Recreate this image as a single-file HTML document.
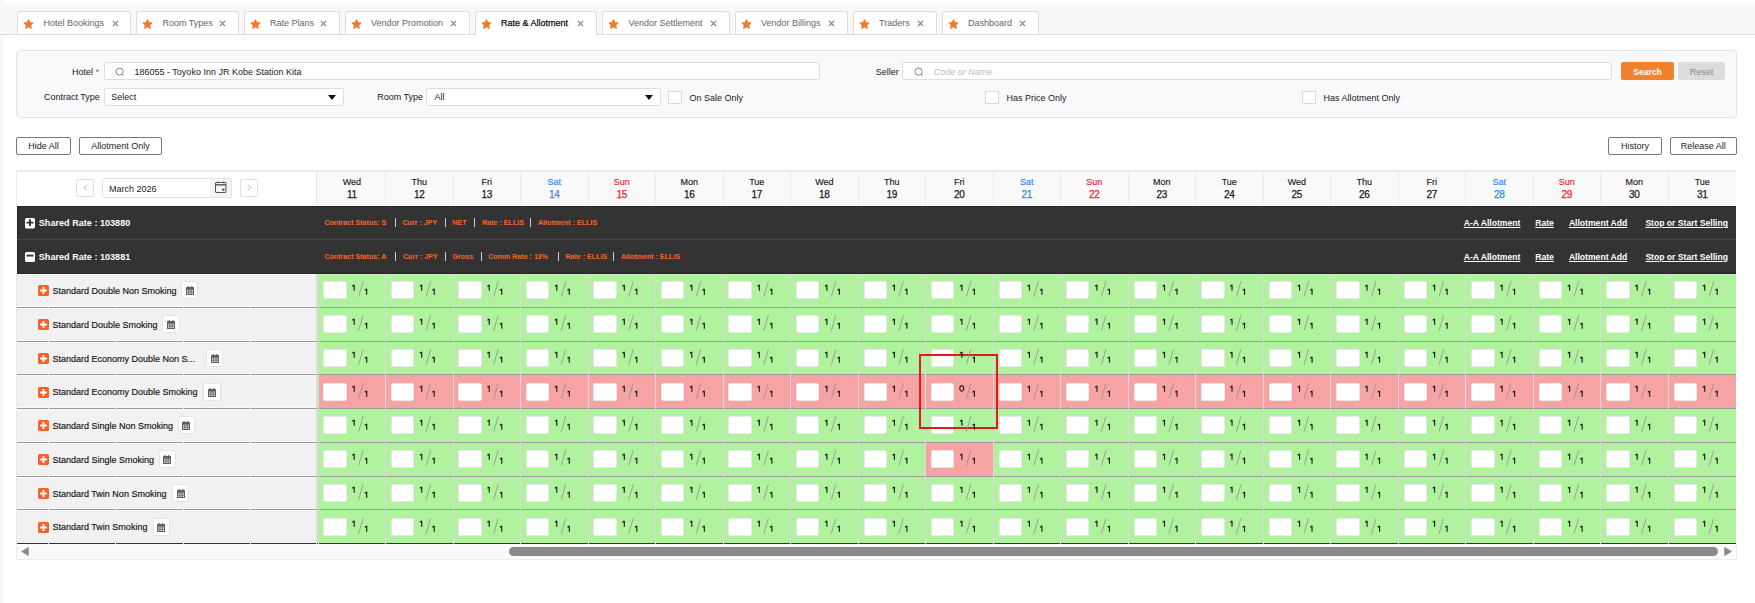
<!DOCTYPE html><html><head><meta charset="utf-8"><style>html,body{margin:0;padding:0;}body{width:1755px;height:603px;overflow:hidden;position:relative;background:#fff;font-family:"Liberation Sans", sans-serif;}.t{position:absolute;white-space:nowrap;}.b{position:absolute;}svg{display:block}</style></head><body><div class="b" style="left:0.00px;top:0.00px;width:3.00px;height:603.00px;background:linear-gradient(90deg,rgba(0,0,30,0.035),rgba(0,0,30,0.015));"></div><div class="b" style="left:0.00px;top:4.00px;width:1755.00px;height:30.00px;background:#f8f7fa;border-bottom:1px solid #dcdcdc;"></div><div class="b" style="left:17.00px;top:11.00px;width:114.00px;height:23.00px;background:#fff;border:1px solid #dcdcdc;border-bottom:none;border-radius:3px 3px 0 0;box-sizing:border-box;"></div><div class="b" style="left:23.00px;top:18.6px;"><svg width="11" height="11" viewBox="0 0 11 11"><path d="M5.50 0.50L6.94 3.52L10.26 3.95L7.83 6.26L8.44 9.55L5.50 7.95L2.56 9.55L3.17 6.26L0.74 3.95L4.06 3.52z" fill="#f07a2a" stroke="#f07a2a" stroke-width="0.8" stroke-linejoin="round"/></svg></div><div class="t" style="left:43.50px;top:19.38px;font-size:9px;line-height:9px;color:#666;">Hotel Bookings</div><div class="b" style="left:111.70px;top:19.6px;"><svg width="7" height="7" viewBox="0 0 7 7"><path d="M0.9 0.9L6.1 6.1M6.1 0.9L0.9 6.1" stroke="#777" stroke-width="1.05"/></svg></div><div class="b" style="left:136.00px;top:11.00px;width:102.50px;height:23.00px;background:#fff;border:1px solid #dcdcdc;border-bottom:none;border-radius:3px 3px 0 0;box-sizing:border-box;"></div><div class="b" style="left:142.00px;top:18.6px;"><svg width="11" height="11" viewBox="0 0 11 11"><path d="M5.50 0.50L6.94 3.52L10.26 3.95L7.83 6.26L8.44 9.55L5.50 7.95L2.56 9.55L3.17 6.26L0.74 3.95L4.06 3.52z" fill="#f07a2a" stroke="#f07a2a" stroke-width="0.8" stroke-linejoin="round"/></svg></div><div class="t" style="left:162.50px;top:19.38px;font-size:9px;line-height:9px;color:#666;">Room Types</div><div class="b" style="left:219.20px;top:19.6px;"><svg width="7" height="7" viewBox="0 0 7 7"><path d="M0.9 0.9L6.1 6.1M6.1 0.9L0.9 6.1" stroke="#777" stroke-width="1.05"/></svg></div><div class="b" style="left:243.50px;top:11.00px;width:96.00px;height:23.00px;background:#fff;border:1px solid #dcdcdc;border-bottom:none;border-radius:3px 3px 0 0;box-sizing:border-box;"></div><div class="b" style="left:249.50px;top:18.6px;"><svg width="11" height="11" viewBox="0 0 11 11"><path d="M5.50 0.50L6.94 3.52L10.26 3.95L7.83 6.26L8.44 9.55L5.50 7.95L2.56 9.55L3.17 6.26L0.74 3.95L4.06 3.52z" fill="#f07a2a" stroke="#f07a2a" stroke-width="0.8" stroke-linejoin="round"/></svg></div><div class="t" style="left:270.00px;top:19.38px;font-size:9px;line-height:9px;color:#666;">Rate Plans</div><div class="b" style="left:320.20px;top:19.6px;"><svg width="7" height="7" viewBox="0 0 7 7"><path d="M0.9 0.9L6.1 6.1M6.1 0.9L0.9 6.1" stroke="#777" stroke-width="1.05"/></svg></div><div class="b" style="left:344.50px;top:11.00px;width:125.00px;height:23.00px;background:#fff;border:1px solid #dcdcdc;border-bottom:none;border-radius:3px 3px 0 0;box-sizing:border-box;"></div><div class="b" style="left:350.50px;top:18.6px;"><svg width="11" height="11" viewBox="0 0 11 11"><path d="M5.50 0.50L6.94 3.52L10.26 3.95L7.83 6.26L8.44 9.55L5.50 7.95L2.56 9.55L3.17 6.26L0.74 3.95L4.06 3.52z" fill="#f07a2a" stroke="#f07a2a" stroke-width="0.8" stroke-linejoin="round"/></svg></div><div class="t" style="left:371.00px;top:19.38px;font-size:9px;line-height:9px;color:#666;">Vendor Promotion</div><div class="b" style="left:450.20px;top:19.6px;"><svg width="7" height="7" viewBox="0 0 7 7"><path d="M0.9 0.9L6.1 6.1M6.1 0.9L0.9 6.1" stroke="#777" stroke-width="1.05"/></svg></div><div class="b" style="left:474.50px;top:11.00px;width:122.00px;height:24.00px;background:#fff;border:1px solid #dcdcdc;border-bottom:none;border-radius:3px 3px 0 0;box-sizing:border-box;"></div><div class="b" style="left:480.50px;top:18.6px;"><svg width="11" height="11" viewBox="0 0 11 11"><path d="M5.50 0.50L6.94 3.52L10.26 3.95L7.83 6.26L8.44 9.55L5.50 7.95L2.56 9.55L3.17 6.26L0.74 3.95L4.06 3.52z" fill="#f07a2a" stroke="#f07a2a" stroke-width="0.8" stroke-linejoin="round"/></svg></div><div class="t" style="left:501.00px;top:19.38px;font-size:9px;line-height:9px;color:#111;-webkit-text-stroke:0.25px #111;">Rate &amp; Allotment</div><div class="b" style="left:577.20px;top:19.6px;"><svg width="7" height="7" viewBox="0 0 7 7"><path d="M0.9 0.9L6.1 6.1M6.1 0.9L0.9 6.1" stroke="#777" stroke-width="1.05"/></svg></div><div class="b" style="left:602.00px;top:11.00px;width:127.50px;height:23.00px;background:#fff;border:1px solid #dcdcdc;border-bottom:none;border-radius:3px 3px 0 0;box-sizing:border-box;"></div><div class="b" style="left:608.00px;top:18.6px;"><svg width="11" height="11" viewBox="0 0 11 11"><path d="M5.50 0.50L6.94 3.52L10.26 3.95L7.83 6.26L8.44 9.55L5.50 7.95L2.56 9.55L3.17 6.26L0.74 3.95L4.06 3.52z" fill="#f07a2a" stroke="#f07a2a" stroke-width="0.8" stroke-linejoin="round"/></svg></div><div class="t" style="left:628.50px;top:19.38px;font-size:9px;line-height:9px;color:#666;">Vendor Settlement</div><div class="b" style="left:710.20px;top:19.6px;"><svg width="7" height="7" viewBox="0 0 7 7"><path d="M0.9 0.9L6.1 6.1M6.1 0.9L0.9 6.1" stroke="#777" stroke-width="1.05"/></svg></div><div class="b" style="left:734.50px;top:11.00px;width:113.00px;height:23.00px;background:#fff;border:1px solid #dcdcdc;border-bottom:none;border-radius:3px 3px 0 0;box-sizing:border-box;"></div><div class="b" style="left:740.50px;top:18.6px;"><svg width="11" height="11" viewBox="0 0 11 11"><path d="M5.50 0.50L6.94 3.52L10.26 3.95L7.83 6.26L8.44 9.55L5.50 7.95L2.56 9.55L3.17 6.26L0.74 3.95L4.06 3.52z" fill="#f07a2a" stroke="#f07a2a" stroke-width="0.8" stroke-linejoin="round"/></svg></div><div class="t" style="left:761.00px;top:19.38px;font-size:9px;line-height:9px;color:#666;">Vendor Billings</div><div class="b" style="left:828.20px;top:19.6px;"><svg width="7" height="7" viewBox="0 0 7 7"><path d="M0.9 0.9L6.1 6.1M6.1 0.9L0.9 6.1" stroke="#777" stroke-width="1.05"/></svg></div><div class="b" style="left:852.50px;top:11.00px;width:84.00px;height:23.00px;background:#fff;border:1px solid #dcdcdc;border-bottom:none;border-radius:3px 3px 0 0;box-sizing:border-box;"></div><div class="b" style="left:858.50px;top:18.6px;"><svg width="11" height="11" viewBox="0 0 11 11"><path d="M5.50 0.50L6.94 3.52L10.26 3.95L7.83 6.26L8.44 9.55L5.50 7.95L2.56 9.55L3.17 6.26L0.74 3.95L4.06 3.52z" fill="#f07a2a" stroke="#f07a2a" stroke-width="0.8" stroke-linejoin="round"/></svg></div><div class="t" style="left:879.00px;top:19.38px;font-size:9px;line-height:9px;color:#666;">Traders</div><div class="b" style="left:917.20px;top:19.6px;"><svg width="7" height="7" viewBox="0 0 7 7"><path d="M0.9 0.9L6.1 6.1M6.1 0.9L0.9 6.1" stroke="#777" stroke-width="1.05"/></svg></div><div class="b" style="left:941.50px;top:11.00px;width:97.00px;height:23.00px;background:#fff;border:1px solid #dcdcdc;border-bottom:none;border-radius:3px 3px 0 0;box-sizing:border-box;"></div><div class="b" style="left:947.50px;top:18.6px;"><svg width="11" height="11" viewBox="0 0 11 11"><path d="M5.50 0.50L6.94 3.52L10.26 3.95L7.83 6.26L8.44 9.55L5.50 7.95L2.56 9.55L3.17 6.26L0.74 3.95L4.06 3.52z" fill="#f07a2a" stroke="#f07a2a" stroke-width="0.8" stroke-linejoin="round"/></svg></div><div class="t" style="left:968.00px;top:19.38px;font-size:9px;line-height:9px;color:#666;">Dashboard</div><div class="b" style="left:1019.20px;top:19.6px;"><svg width="7" height="7" viewBox="0 0 7 7"><path d="M0.9 0.9L6.1 6.1M6.1 0.9L0.9 6.1" stroke="#777" stroke-width="1.05"/></svg></div><div class="b" style="left:16.00px;top:50.00px;width:1721.00px;height:68.00px;background:#f9f8fa;border:1px solid #e2e2e2;border-radius:4px;box-sizing:border-box;"></div><div class="t" style="left:-307.00px;width:400px;text-align:right;top:68.18px;font-size:9px;line-height:9px;color:#222;">Hotel</div><div class="t" style="left:95.80px;top:67.68px;font-size:9px;line-height:9px;color:#e33;">*</div><div class="b" style="left:103.50px;top:62.00px;width:716.50px;height:18.00px;background:#fff;border:1px solid #dedede;border-radius:2px;box-sizing:border-box;"></div><div class="b" style="left:114.5px;top:66.5px;width:10px;height:10px;"><svg width="10" height="10" viewBox="0 0 10 10"><circle cx="4.6" cy="4.6" r="3.6" fill="none" stroke="#888" stroke-width="1"/><path d="M7.2 7.2L8.8 8.8" stroke="#888" stroke-width="1"/></svg></div><div class="t" style="left:134.50px;top:68.18px;font-size:9px;line-height:9px;color:#222;">186055 - Toyoko Inn JR Kobe Station Kita</div><div class="t" style="left:498.80px;width:400px;text-align:right;top:68.18px;font-size:9px;line-height:9px;color:#222;">Seller</div><div class="b" style="left:902.00px;top:62.00px;width:709.50px;height:18.00px;background:#fff;border:1px solid #dedede;border-radius:2px;box-sizing:border-box;"></div><div class="b" style="left:913.5px;top:66.5px;width:10px;height:10px;"><svg width="10" height="10" viewBox="0 0 10 10"><circle cx="4.6" cy="4.6" r="3.6" fill="none" stroke="#888" stroke-width="1"/><path d="M7.2 7.2L8.8 8.8" stroke="#888" stroke-width="1"/></svg></div><div class="t" style="left:933.80px;top:68.18px;font-size:9px;line-height:9px;color:#bbb;font-style:italic;">Code or Name</div><div class="b" style="left:1621.00px;top:62.00px;width:53.00px;height:17.50px;background:#f0822e;border-radius:2px;"></div><div class="t" style="left:1547.50px;width:200px;text-align:center;top:68.02px;font-size:8.6px;line-height:8.6px;color:#fff;font-weight:700;">Search</div><div class="b" style="left:1678.00px;top:62.00px;width:47.00px;height:17.50px;background:#dcdcdc;border-radius:2px;"></div><div class="t" style="left:1601.50px;width:200px;text-align:center;top:67.68px;font-size:9px;line-height:9px;color:#8a8a8a;">Reset</div><div class="t" style="left:-300.20px;width:400px;text-align:right;top:92.68px;font-size:9px;line-height:9px;color:#222;">Contract Type</div><div class="b" style="left:103.50px;top:88.00px;width:240.00px;height:17.50px;background:#fff;border:1px solid #dedede;border-radius:2px;box-sizing:border-box;"></div><div class="t" style="left:111.30px;top:92.68px;font-size:9px;line-height:9px;color:#222;">Select</div><div class="b" style="left:328px;top:94.5px;width:8px;height:5px;"><svg width="8" height="5" viewBox="0 0 8 5"><path d="M0 0H8L4 5z" fill="#111"/></svg></div><div class="t" style="left:23.00px;width:400px;text-align:right;top:92.68px;font-size:9px;line-height:9px;color:#222;">Room Type</div><div class="b" style="left:425.50px;top:88.00px;width:235.00px;height:17.50px;background:#fff;border:1px solid #dedede;border-radius:2px;box-sizing:border-box;"></div><div class="t" style="left:434.50px;top:92.68px;font-size:9px;line-height:9px;color:#222;">All</div><div class="b" style="left:645px;top:94.5px;width:8px;height:5px;"><svg width="8" height="5" viewBox="0 0 8 5"><path d="M0 0H8L4 5z" fill="#111"/></svg></div><div class="b" style="left:668.00px;top:91.00px;width:13.50px;height:12.50px;background:#fff;border:1px solid #dadada;box-sizing:border-box;"></div><div class="t" style="left:689.50px;top:94.28px;font-size:9px;line-height:9px;color:#222;">On Sale Only</div><div class="b" style="left:985.00px;top:91.00px;width:13.50px;height:12.50px;background:#fff;border:1px solid #dadada;box-sizing:border-box;"></div><div class="t" style="left:1006.50px;top:94.28px;font-size:9px;line-height:9px;color:#222;">Has Price Only</div><div class="b" style="left:1302.00px;top:91.00px;width:13.50px;height:12.50px;background:#fff;border:1px solid #dadada;box-sizing:border-box;"></div><div class="t" style="left:1323.50px;top:94.28px;font-size:9px;line-height:9px;color:#222;">Has Allotment Only</div><div class="b" style="left:16.00px;top:137.00px;width:55.00px;height:18.00px;background:#fff;border:1px solid #777;border-radius:2px;box-sizing:border-box;"></div><div class="t" style="left:-56.50px;width:200px;text-align:center;top:141.58px;font-size:9px;line-height:9px;color:#222;">Hide All</div><div class="b" style="left:79.00px;top:137.00px;width:83.00px;height:18.00px;background:#fff;border:1px solid #777;border-radius:2px;box-sizing:border-box;"></div><div class="t" style="left:20.50px;width:200px;text-align:center;top:141.58px;font-size:9px;line-height:9px;color:#222;">Allotment Only</div><div class="b" style="left:1608.00px;top:137.00px;width:54.00px;height:18.00px;background:#fff;border:1px solid #777;border-radius:2px;box-sizing:border-box;"></div><div class="t" style="left:1535.00px;width:200px;text-align:center;top:141.58px;font-size:9px;line-height:9px;color:#222;">History</div><div class="b" style="left:1669.50px;top:137.00px;width:67.50px;height:18.00px;background:#fff;border:1px solid #777;border-radius:2px;box-sizing:border-box;"></div><div class="t" style="left:1603.25px;width:200px;text-align:center;top:141.58px;font-size:9px;line-height:9px;color:#222;">Release All</div><div class="b" style="left:16.00px;top:170.00px;width:1720.00px;height:2.00px;background:#ececec;"></div><div class="b" style="left:16.00px;top:172.00px;width:1.00px;height:34.00px;background:#ececec;"></div><div class="b" style="left:316.00px;top:172.00px;width:1.00px;height:33.00px;background:#e6e6e6;"></div><div class="b" style="left:317.00px;top:172.00px;width:1419.00px;height:33.00px;background:#f9f9f9;"></div><div class="t" style="left:251.80px;width:200px;text-align:center;top:178.18px;font-size:9px;line-height:9px;color:#1a1a1a;-webkit-text-stroke:0.15px #1a1a1a;">Wed</div><div class="t" style="left:251.80px;width:200px;text-align:center;top:189.94px;font-size:10px;line-height:10px;color:#1a1a1a;letter-spacing:-0.3px;-webkit-text-stroke:0.25px #1a1a1a;">11</div><div class="b" style="left:385.00px;top:172.00px;width:1.00px;height:33.00px;background:#ebebeb;"></div><div class="t" style="left:319.30px;width:200px;text-align:center;top:178.18px;font-size:9px;line-height:9px;color:#1a1a1a;-webkit-text-stroke:0.15px #1a1a1a;">Thu</div><div class="t" style="left:319.30px;width:200px;text-align:center;top:189.94px;font-size:10px;line-height:10px;color:#1a1a1a;letter-spacing:-0.3px;-webkit-text-stroke:0.25px #1a1a1a;">12</div><div class="b" style="left:453.00px;top:172.00px;width:1.00px;height:33.00px;background:#ebebeb;"></div><div class="t" style="left:386.80px;width:200px;text-align:center;top:178.18px;font-size:9px;line-height:9px;color:#1a1a1a;-webkit-text-stroke:0.15px #1a1a1a;">Fri</div><div class="t" style="left:386.80px;width:200px;text-align:center;top:189.94px;font-size:10px;line-height:10px;color:#1a1a1a;letter-spacing:-0.3px;-webkit-text-stroke:0.25px #1a1a1a;">13</div><div class="b" style="left:520.00px;top:172.00px;width:1.00px;height:33.00px;background:#ebebeb;"></div><div class="t" style="left:454.30px;width:200px;text-align:center;top:178.18px;font-size:9px;line-height:9px;color:#2a8af6;-webkit-text-stroke:0.15px #2a8af6;">Sat</div><div class="t" style="left:454.30px;width:200px;text-align:center;top:189.94px;font-size:10px;line-height:10px;color:#2a8af6;letter-spacing:-0.3px;-webkit-text-stroke:0.25px #2a8af6;">14</div><div class="b" style="left:588.00px;top:172.00px;width:1.00px;height:33.00px;background:#ebebeb;"></div><div class="t" style="left:521.80px;width:200px;text-align:center;top:178.18px;font-size:9px;line-height:9px;color:#f2212b;-webkit-text-stroke:0.15px #f2212b;">Sun</div><div class="t" style="left:521.80px;width:200px;text-align:center;top:189.94px;font-size:10px;line-height:10px;color:#f2212b;letter-spacing:-0.3px;-webkit-text-stroke:0.25px #f2212b;">15</div><div class="b" style="left:655.00px;top:172.00px;width:1.00px;height:33.00px;background:#ebebeb;"></div><div class="t" style="left:589.30px;width:200px;text-align:center;top:178.18px;font-size:9px;line-height:9px;color:#1a1a1a;-webkit-text-stroke:0.15px #1a1a1a;">Mon</div><div class="t" style="left:589.30px;width:200px;text-align:center;top:189.94px;font-size:10px;line-height:10px;color:#1a1a1a;letter-spacing:-0.3px;-webkit-text-stroke:0.25px #1a1a1a;">16</div><div class="b" style="left:723.00px;top:172.00px;width:1.00px;height:33.00px;background:#ebebeb;"></div><div class="t" style="left:656.80px;width:200px;text-align:center;top:178.18px;font-size:9px;line-height:9px;color:#1a1a1a;-webkit-text-stroke:0.15px #1a1a1a;">Tue</div><div class="t" style="left:656.80px;width:200px;text-align:center;top:189.94px;font-size:10px;line-height:10px;color:#1a1a1a;letter-spacing:-0.3px;-webkit-text-stroke:0.25px #1a1a1a;">17</div><div class="b" style="left:790.00px;top:172.00px;width:1.00px;height:33.00px;background:#ebebeb;"></div><div class="t" style="left:724.30px;width:200px;text-align:center;top:178.18px;font-size:9px;line-height:9px;color:#1a1a1a;-webkit-text-stroke:0.15px #1a1a1a;">Wed</div><div class="t" style="left:724.30px;width:200px;text-align:center;top:189.94px;font-size:10px;line-height:10px;color:#1a1a1a;letter-spacing:-0.3px;-webkit-text-stroke:0.25px #1a1a1a;">18</div><div class="b" style="left:858.00px;top:172.00px;width:1.00px;height:33.00px;background:#ebebeb;"></div><div class="t" style="left:791.80px;width:200px;text-align:center;top:178.18px;font-size:9px;line-height:9px;color:#1a1a1a;-webkit-text-stroke:0.15px #1a1a1a;">Thu</div><div class="t" style="left:791.80px;width:200px;text-align:center;top:189.94px;font-size:10px;line-height:10px;color:#1a1a1a;letter-spacing:-0.3px;-webkit-text-stroke:0.25px #1a1a1a;">19</div><div class="b" style="left:925.00px;top:172.00px;width:1.00px;height:33.00px;background:#ebebeb;"></div><div class="t" style="left:859.30px;width:200px;text-align:center;top:178.18px;font-size:9px;line-height:9px;color:#1a1a1a;-webkit-text-stroke:0.15px #1a1a1a;">Fri</div><div class="t" style="left:859.30px;width:200px;text-align:center;top:189.94px;font-size:10px;line-height:10px;color:#1a1a1a;letter-spacing:-0.3px;-webkit-text-stroke:0.25px #1a1a1a;">20</div><div class="b" style="left:993.00px;top:172.00px;width:1.00px;height:33.00px;background:#ebebeb;"></div><div class="t" style="left:926.80px;width:200px;text-align:center;top:178.18px;font-size:9px;line-height:9px;color:#2a8af6;-webkit-text-stroke:0.15px #2a8af6;">Sat</div><div class="t" style="left:926.80px;width:200px;text-align:center;top:189.94px;font-size:10px;line-height:10px;color:#2a8af6;letter-spacing:-0.3px;-webkit-text-stroke:0.25px #2a8af6;">21</div><div class="b" style="left:1060.00px;top:172.00px;width:1.00px;height:33.00px;background:#ebebeb;"></div><div class="t" style="left:994.30px;width:200px;text-align:center;top:178.18px;font-size:9px;line-height:9px;color:#f2212b;-webkit-text-stroke:0.15px #f2212b;">Sun</div><div class="t" style="left:994.30px;width:200px;text-align:center;top:189.94px;font-size:10px;line-height:10px;color:#f2212b;letter-spacing:-0.3px;-webkit-text-stroke:0.25px #f2212b;">22</div><div class="b" style="left:1128.00px;top:172.00px;width:1.00px;height:33.00px;background:#ebebeb;"></div><div class="t" style="left:1061.80px;width:200px;text-align:center;top:178.18px;font-size:9px;line-height:9px;color:#1a1a1a;-webkit-text-stroke:0.15px #1a1a1a;">Mon</div><div class="t" style="left:1061.80px;width:200px;text-align:center;top:189.94px;font-size:10px;line-height:10px;color:#1a1a1a;letter-spacing:-0.3px;-webkit-text-stroke:0.25px #1a1a1a;">23</div><div class="b" style="left:1195.00px;top:172.00px;width:1.00px;height:33.00px;background:#ebebeb;"></div><div class="t" style="left:1129.30px;width:200px;text-align:center;top:178.18px;font-size:9px;line-height:9px;color:#1a1a1a;-webkit-text-stroke:0.15px #1a1a1a;">Tue</div><div class="t" style="left:1129.30px;width:200px;text-align:center;top:189.94px;font-size:10px;line-height:10px;color:#1a1a1a;letter-spacing:-0.3px;-webkit-text-stroke:0.25px #1a1a1a;">24</div><div class="b" style="left:1263.00px;top:172.00px;width:1.00px;height:33.00px;background:#ebebeb;"></div><div class="t" style="left:1196.80px;width:200px;text-align:center;top:178.18px;font-size:9px;line-height:9px;color:#1a1a1a;-webkit-text-stroke:0.15px #1a1a1a;">Wed</div><div class="t" style="left:1196.80px;width:200px;text-align:center;top:189.94px;font-size:10px;line-height:10px;color:#1a1a1a;letter-spacing:-0.3px;-webkit-text-stroke:0.25px #1a1a1a;">25</div><div class="b" style="left:1330.00px;top:172.00px;width:1.00px;height:33.00px;background:#ebebeb;"></div><div class="t" style="left:1264.30px;width:200px;text-align:center;top:178.18px;font-size:9px;line-height:9px;color:#1a1a1a;-webkit-text-stroke:0.15px #1a1a1a;">Thu</div><div class="t" style="left:1264.30px;width:200px;text-align:center;top:189.94px;font-size:10px;line-height:10px;color:#1a1a1a;letter-spacing:-0.3px;-webkit-text-stroke:0.25px #1a1a1a;">26</div><div class="b" style="left:1398.00px;top:172.00px;width:1.00px;height:33.00px;background:#ebebeb;"></div><div class="t" style="left:1331.80px;width:200px;text-align:center;top:178.18px;font-size:9px;line-height:9px;color:#1a1a1a;-webkit-text-stroke:0.15px #1a1a1a;">Fri</div><div class="t" style="left:1331.80px;width:200px;text-align:center;top:189.94px;font-size:10px;line-height:10px;color:#1a1a1a;letter-spacing:-0.3px;-webkit-text-stroke:0.25px #1a1a1a;">27</div><div class="b" style="left:1465.00px;top:172.00px;width:1.00px;height:33.00px;background:#ebebeb;"></div><div class="t" style="left:1399.30px;width:200px;text-align:center;top:178.18px;font-size:9px;line-height:9px;color:#2a8af6;-webkit-text-stroke:0.15px #2a8af6;">Sat</div><div class="t" style="left:1399.30px;width:200px;text-align:center;top:189.94px;font-size:10px;line-height:10px;color:#2a8af6;letter-spacing:-0.3px;-webkit-text-stroke:0.25px #2a8af6;">28</div><div class="b" style="left:1533.00px;top:172.00px;width:1.00px;height:33.00px;background:#ebebeb;"></div><div class="t" style="left:1466.80px;width:200px;text-align:center;top:178.18px;font-size:9px;line-height:9px;color:#f2212b;-webkit-text-stroke:0.15px #f2212b;">Sun</div><div class="t" style="left:1466.80px;width:200px;text-align:center;top:189.94px;font-size:10px;line-height:10px;color:#f2212b;letter-spacing:-0.3px;-webkit-text-stroke:0.25px #f2212b;">29</div><div class="b" style="left:1600.00px;top:172.00px;width:1.00px;height:33.00px;background:#ebebeb;"></div><div class="t" style="left:1534.30px;width:200px;text-align:center;top:178.18px;font-size:9px;line-height:9px;color:#1a1a1a;-webkit-text-stroke:0.15px #1a1a1a;">Mon</div><div class="t" style="left:1534.30px;width:200px;text-align:center;top:189.94px;font-size:10px;line-height:10px;color:#1a1a1a;letter-spacing:-0.3px;-webkit-text-stroke:0.25px #1a1a1a;">30</div><div class="b" style="left:1668.00px;top:172.00px;width:1.00px;height:33.00px;background:#ebebeb;"></div><div class="t" style="left:1602.30px;width:200px;text-align:center;top:178.18px;font-size:9px;line-height:9px;color:#1a1a1a;-webkit-text-stroke:0.15px #1a1a1a;">Tue</div><div class="t" style="left:1602.30px;width:200px;text-align:center;top:189.94px;font-size:10px;line-height:10px;color:#1a1a1a;letter-spacing:-0.3px;-webkit-text-stroke:0.25px #1a1a1a;">31</div><div class="b" style="left:76.00px;top:179.00px;width:18.00px;height:17.50px;background:#fff;border:1px solid #dedede;border-radius:2px;box-sizing:border-box;"></div><div class="b" style="left:240.30px;top:179.00px;width:18.00px;height:17.50px;background:#fff;border:1px solid #dedede;border-radius:2px;box-sizing:border-box;"></div><div class="b" style="left:82.5px;top:184px;"><svg width="5" height="7" viewBox="0 0 5 7"><path d="M3.8 0.8L1.2 3.5L3.8 6.2" fill="none" stroke="#aaa" stroke-width="0.9"/></svg></div><div class="b" style="left:246.5px;top:184px;"><svg width="5" height="7" viewBox="0 0 5 7"><path d="M1.2 0.8L3.8 3.5L1.2 6.2" fill="none" stroke="#aaa" stroke-width="0.9"/></svg></div><div class="b" style="left:102.30px;top:178.20px;width:129.50px;height:20.30px;background:#fff;border:1px solid #e2e2e2;border-radius:2px;box-sizing:border-box;"></div><div class="b" style="left:210.00px;top:179.20px;width:20.50px;height:18.30px;background:#f4f4f4;"></div><div class="b" style="left:214.5px;top:181px;"><svg width="12" height="12" viewBox="0 0 12 12"><rect x="0.5" y="1.5" width="10.5" height="10" rx="0.5" fill="none" stroke="#555" stroke-width="1"/><path d="M0.5 3.8H11" stroke="#555" stroke-width="1.4"/><path d="M3 0.5V2.2M8.5 0.5V2.2" stroke="#555" stroke-width="1"/><rect x="7.3" y="7.6" width="2.2" height="2.2" fill="#555"/></svg></div><div class="t" style="left:109.00px;top:185.28px;font-size:9px;line-height:9px;color:#222;">March 2026</div><div class="b" style="left:17.00px;top:206.00px;width:1719.00px;height:68.00px;background:#333;"></div><div class="b" style="left:17.00px;top:206.00px;width:1719.00px;height:1.00px;background:#262626;"></div><div class="b" style="left:17.00px;top:273.00px;width:1719.00px;height:1.00px;background:#262626;"></div><div class="b" style="left:17.00px;top:206.00px;width:1.00px;height:68.00px;background:#262626;"></div><div class="b" style="left:17.00px;top:239.00px;width:1719.00px;height:1.00px;background:#474747;"></div><div class="b" style="left:25px;top:218.1px;"><svg width="10" height="10.5" viewBox="0 0 10 10.5"><rect width="10" height="10.5" rx="1.6" fill="#fff"/><path d="M5 1.2V7.9M1.5 4.6H8.5" stroke="#333" stroke-width="1.9"/></svg></div><div class="t" style="left:38.80px;top:219.00px;font-size:9.1px;line-height:9.1px;color:#fff;font-weight:700;">Shared Rate : 103880</div><div class="t" style="left:1328.00px;width:400px;text-align:right;top:219.12px;font-size:8.6px;line-height:8.6px;color:#fff;font-weight:700;text-decoration:underline;">Stop or Start Selling</div><div class="t" style="left:1227.30px;width:400px;text-align:right;top:219.12px;font-size:8.6px;line-height:8.6px;color:#fff;font-weight:700;text-decoration:underline;">Allotment Add</div><div class="t" style="left:1153.90px;width:400px;text-align:right;top:219.12px;font-size:8.6px;line-height:8.6px;color:#fff;font-weight:700;text-decoration:underline;">Rate</div><div class="t" style="left:1120.40px;width:400px;text-align:right;top:219.12px;font-size:8.6px;line-height:8.6px;color:#fff;font-weight:700;text-decoration:underline;">A-A Allotment</div><div class="b" style="left:25px;top:252.3px;"><svg width="10" height="10" viewBox="0 0 10 10"><rect width="10" height="10" rx="1.6" fill="#fff"/><path d="M1.5 3.6H8.5" stroke="#333" stroke-width="1.9"/></svg></div><div class="t" style="left:38.80px;top:252.80px;font-size:9.1px;line-height:9.1px;color:#fff;font-weight:700;">Shared Rate : 103881</div><div class="t" style="left:1328.00px;width:400px;text-align:right;top:252.92px;font-size:8.6px;line-height:8.6px;color:#fff;font-weight:700;text-decoration:underline;">Stop or Start Selling</div><div class="t" style="left:1227.30px;width:400px;text-align:right;top:252.92px;font-size:8.6px;line-height:8.6px;color:#fff;font-weight:700;text-decoration:underline;">Allotment Add</div><div class="t" style="left:1153.90px;width:400px;text-align:right;top:252.92px;font-size:8.6px;line-height:8.6px;color:#fff;font-weight:700;text-decoration:underline;">Rate</div><div class="t" style="left:1120.40px;width:400px;text-align:right;top:252.92px;font-size:8.6px;line-height:8.6px;color:#fff;font-weight:700;text-decoration:underline;">A-A Allotment</div><div class="t" style="left:324.40px;top:219.79px;font-size:7.1px;line-height:7.1px;color:#f3682c;font-weight:700;">Contract Status: S</div><div class="b" style="left:394.50px;top:218.20px;width:1.00px;height:9.00px;background:#cfcfcf;"></div><div class="t" style="left:402.50px;top:219.79px;font-size:7.1px;line-height:7.1px;color:#f3682c;font-weight:700;">Curr : JPY</div><div class="b" style="left:444.60px;top:218.20px;width:1.00px;height:9.00px;background:#cfcfcf;"></div><div class="t" style="left:452.30px;top:219.79px;font-size:7.1px;line-height:7.1px;color:#f3682c;font-weight:700;">NET</div><div class="b" style="left:474.30px;top:218.20px;width:1.00px;height:9.00px;background:#cfcfcf;"></div><div class="t" style="left:482.20px;top:219.79px;font-size:7.1px;line-height:7.1px;color:#f3682c;font-weight:700;">Rate : ELLIS</div><div class="b" style="left:530.40px;top:218.20px;width:1.00px;height:9.00px;background:#cfcfcf;"></div><div class="t" style="left:538.00px;top:219.79px;font-size:7.1px;line-height:7.1px;color:#f3682c;font-weight:700;">Allotment : ELLIS</div><div class="t" style="left:324.40px;top:253.79px;font-size:7.1px;line-height:7.1px;color:#f3682c;font-weight:700;">Contract Status: A</div><div class="b" style="left:395.30px;top:252.20px;width:1.00px;height:9.00px;background:#cfcfcf;"></div><div class="t" style="left:403.00px;top:253.79px;font-size:7.1px;line-height:7.1px;color:#f3682c;font-weight:700;">Curr : JPY</div><div class="b" style="left:444.60px;top:252.20px;width:1.00px;height:9.00px;background:#cfcfcf;"></div><div class="t" style="left:452.60px;top:253.79px;font-size:7.1px;line-height:7.1px;color:#f3682c;font-weight:700;">Gross</div><div class="b" style="left:480.50px;top:252.20px;width:1.00px;height:9.00px;background:#cfcfcf;"></div><div class="t" style="left:488.20px;top:253.79px;font-size:7.1px;line-height:7.1px;color:#f3682c;font-weight:700;">Comm Rate : 13%</div><div class="b" style="left:557.70px;top:252.20px;width:1.00px;height:9.00px;background:#cfcfcf;"></div><div class="t" style="left:565.40px;top:253.79px;font-size:7.1px;line-height:7.1px;color:#f3682c;font-weight:700;">Rate : ELLIS</div><div class="b" style="left:613.30px;top:252.20px;width:1.00px;height:9.00px;background:#cfcfcf;"></div><div class="t" style="left:621.00px;top:253.79px;font-size:7.1px;line-height:7.1px;color:#f3682c;font-weight:700;">Allotment : ELLIS</div><div class="b" style="left:16.00px;top:274.00px;width:301.00px;height:270.00px;background:#f1f1f1;"></div><div class="b" style="left:16.00px;top:274.00px;width:1.00px;height:270.00px;background:#e8e8e8;"></div><div class="b" style="left:317.00px;top:274.00px;width:1419.00px;height:270.00px;background:#b1f29f;"></div><div class="b" style="left:17.00px;top:274.00px;width:300.00px;height:1.00px;background:rgba(255,255,255,0.55);"></div><div class="b" style="left:317.00px;top:274.00px;width:1419.00px;height:1.00px;background:rgba(255,255,255,0.2);"></div><div class="b" style="left:319.00px;top:375.00px;width:66.00px;height:33.00px;background:#f5a3a3;"></div><div class="b" style="left:386.00px;top:375.00px;width:67.00px;height:33.00px;background:#f5a3a3;"></div><div class="b" style="left:454.00px;top:375.00px;width:66.00px;height:33.00px;background:#f5a3a3;"></div><div class="b" style="left:521.00px;top:375.00px;width:67.00px;height:33.00px;background:#f5a3a3;"></div><div class="b" style="left:589.00px;top:375.00px;width:66.00px;height:33.00px;background:#f5a3a3;"></div><div class="b" style="left:656.00px;top:375.00px;width:67.00px;height:33.00px;background:#f5a3a3;"></div><div class="b" style="left:724.00px;top:375.00px;width:66.00px;height:33.00px;background:#f5a3a3;"></div><div class="b" style="left:791.00px;top:375.00px;width:67.00px;height:33.00px;background:#f5a3a3;"></div><div class="b" style="left:859.00px;top:375.00px;width:66.00px;height:33.00px;background:#f5a3a3;"></div><div class="b" style="left:926.00px;top:375.00px;width:67.00px;height:33.00px;background:#f5a3a3;"></div><div class="b" style="left:994.00px;top:375.00px;width:66.00px;height:33.00px;background:#f5a3a3;"></div><div class="b" style="left:1061.00px;top:375.00px;width:67.00px;height:33.00px;background:#f5a3a3;"></div><div class="b" style="left:1129.00px;top:375.00px;width:66.00px;height:33.00px;background:#f5a3a3;"></div><div class="b" style="left:1196.00px;top:375.00px;width:67.00px;height:33.00px;background:#f5a3a3;"></div><div class="b" style="left:1264.00px;top:375.00px;width:66.00px;height:33.00px;background:#f5a3a3;"></div><div class="b" style="left:1331.00px;top:375.00px;width:67.00px;height:33.00px;background:#f5a3a3;"></div><div class="b" style="left:1399.00px;top:375.00px;width:66.00px;height:33.00px;background:#f5a3a3;"></div><div class="b" style="left:1466.00px;top:375.00px;width:67.00px;height:33.00px;background:#f5a3a3;"></div><div class="b" style="left:1534.00px;top:375.00px;width:66.00px;height:33.00px;background:#f5a3a3;"></div><div class="b" style="left:1601.00px;top:375.00px;width:67.00px;height:33.00px;background:#f5a3a3;"></div><div class="b" style="left:1669.00px;top:375.00px;width:67.00px;height:33.00px;background:#f5a3a3;"></div><div class="b" style="left:926.00px;top:443.00px;width:67.00px;height:33.00px;background:#f5a3a3;"></div><div class="b" style="left:16.00px;top:306.00px;width:301.00px;height:1.00px;background:rgba(255,255,255,0.5);"></div><div class="b" style="left:16.00px;top:308.00px;width:301.00px;height:1.00px;background:rgba(255,255,255,0.5);"></div><div class="b" style="left:17.00px;top:307.00px;width:1719.00px;height:1.00px;background:#999;"></div><div class="b" style="left:16.00px;top:340.00px;width:301.00px;height:1.00px;background:rgba(255,255,255,0.5);"></div><div class="b" style="left:16.00px;top:342.00px;width:301.00px;height:1.00px;background:rgba(255,255,255,0.5);"></div><div class="b" style="left:17.00px;top:341.00px;width:1719.00px;height:1.00px;background:#999;"></div><div class="b" style="left:16.00px;top:373.00px;width:301.00px;height:1.00px;background:rgba(255,255,255,0.5);"></div><div class="b" style="left:16.00px;top:375.00px;width:301.00px;height:1.00px;background:rgba(255,255,255,0.5);"></div><div class="b" style="left:17.00px;top:374.00px;width:1719.00px;height:1.00px;background:#999;"></div><div class="b" style="left:16.00px;top:407.00px;width:301.00px;height:1.00px;background:rgba(255,255,255,0.5);"></div><div class="b" style="left:16.00px;top:409.00px;width:301.00px;height:1.00px;background:rgba(255,255,255,0.5);"></div><div class="b" style="left:17.00px;top:408.00px;width:1719.00px;height:1.00px;background:#999;"></div><div class="b" style="left:16.00px;top:441.00px;width:301.00px;height:1.00px;background:rgba(255,255,255,0.5);"></div><div class="b" style="left:16.00px;top:443.00px;width:301.00px;height:1.00px;background:rgba(255,255,255,0.5);"></div><div class="b" style="left:17.00px;top:442.00px;width:1719.00px;height:1.00px;background:#999;"></div><div class="b" style="left:16.00px;top:475.00px;width:301.00px;height:1.00px;background:rgba(255,255,255,0.5);"></div><div class="b" style="left:16.00px;top:477.00px;width:301.00px;height:1.00px;background:rgba(255,255,255,0.5);"></div><div class="b" style="left:17.00px;top:476.00px;width:1719.00px;height:1.00px;background:#999;"></div><div class="b" style="left:16.00px;top:508.00px;width:301.00px;height:1.00px;background:rgba(255,255,255,0.5);"></div><div class="b" style="left:16.00px;top:510.00px;width:301.00px;height:1.00px;background:rgba(255,255,255,0.5);"></div><div class="b" style="left:17.00px;top:509.00px;width:1719.00px;height:1.00px;background:#999;"></div><div class="b" style="left:17.00px;top:543.00px;width:1719.00px;height:1.00px;background:#333;"></div><div class="b" style="left:48.00px;top:306.00px;width:1.00px;height:3.00px;background:#f6f6f6;"></div><div class="b" style="left:48.00px;top:340.00px;width:1.00px;height:3.00px;background:#f6f6f6;"></div><div class="b" style="left:48.00px;top:373.00px;width:1.00px;height:3.00px;background:#f6f6f6;"></div><div class="b" style="left:48.00px;top:407.00px;width:1.00px;height:3.00px;background:#f6f6f6;"></div><div class="b" style="left:48.00px;top:441.00px;width:1.00px;height:3.00px;background:#f6f6f6;"></div><div class="b" style="left:48.00px;top:475.00px;width:1.00px;height:3.00px;background:#f6f6f6;"></div><div class="b" style="left:48.00px;top:508.00px;width:1.00px;height:3.00px;background:#f6f6f6;"></div><div class="b" style="left:48.00px;top:542.00px;width:1.00px;height:3.00px;background:#f6f6f6;"></div><div class="b" style="left:115.00px;top:306.00px;width:1.00px;height:3.00px;background:#f6f6f6;"></div><div class="b" style="left:115.00px;top:340.00px;width:1.00px;height:3.00px;background:#f6f6f6;"></div><div class="b" style="left:115.00px;top:373.00px;width:1.00px;height:3.00px;background:#f6f6f6;"></div><div class="b" style="left:115.00px;top:407.00px;width:1.00px;height:3.00px;background:#f6f6f6;"></div><div class="b" style="left:115.00px;top:441.00px;width:1.00px;height:3.00px;background:#f6f6f6;"></div><div class="b" style="left:115.00px;top:475.00px;width:1.00px;height:3.00px;background:#f6f6f6;"></div><div class="b" style="left:115.00px;top:508.00px;width:1.00px;height:3.00px;background:#f6f6f6;"></div><div class="b" style="left:115.00px;top:542.00px;width:1.00px;height:3.00px;background:#f6f6f6;"></div><div class="b" style="left:183.00px;top:306.00px;width:1.00px;height:3.00px;background:#f6f6f6;"></div><div class="b" style="left:183.00px;top:340.00px;width:1.00px;height:3.00px;background:#f6f6f6;"></div><div class="b" style="left:183.00px;top:373.00px;width:1.00px;height:3.00px;background:#f6f6f6;"></div><div class="b" style="left:183.00px;top:407.00px;width:1.00px;height:3.00px;background:#f6f6f6;"></div><div class="b" style="left:183.00px;top:441.00px;width:1.00px;height:3.00px;background:#f6f6f6;"></div><div class="b" style="left:183.00px;top:475.00px;width:1.00px;height:3.00px;background:#f6f6f6;"></div><div class="b" style="left:183.00px;top:508.00px;width:1.00px;height:3.00px;background:#f6f6f6;"></div><div class="b" style="left:183.00px;top:542.00px;width:1.00px;height:3.00px;background:#f6f6f6;"></div><div class="b" style="left:250.00px;top:306.00px;width:1.00px;height:3.00px;background:#f6f6f6;"></div><div class="b" style="left:250.00px;top:340.00px;width:1.00px;height:3.00px;background:#f6f6f6;"></div><div class="b" style="left:250.00px;top:373.00px;width:1.00px;height:3.00px;background:#f6f6f6;"></div><div class="b" style="left:250.00px;top:407.00px;width:1.00px;height:3.00px;background:#f6f6f6;"></div><div class="b" style="left:250.00px;top:441.00px;width:1.00px;height:3.00px;background:#f6f6f6;"></div><div class="b" style="left:250.00px;top:475.00px;width:1.00px;height:3.00px;background:#f6f6f6;"></div><div class="b" style="left:250.00px;top:508.00px;width:1.00px;height:3.00px;background:#f6f6f6;"></div><div class="b" style="left:250.00px;top:542.00px;width:1.00px;height:3.00px;background:#f6f6f6;"></div><div class="b" style="left:316.00px;top:274.00px;width:1.00px;height:270.00px;background:#e2dde2;"></div><div class="b" style="left:318.00px;top:274.00px;width:1.00px;height:270.00px;background:#dcd8dc;"></div><div class="b" style="left:385.00px;top:274.00px;width:1.00px;height:270.00px;background:#dcd8dc;"></div><div class="b" style="left:453.00px;top:274.00px;width:1.00px;height:270.00px;background:#dcd8dc;"></div><div class="b" style="left:520.00px;top:274.00px;width:1.00px;height:270.00px;background:#dcd8dc;"></div><div class="b" style="left:588.00px;top:274.00px;width:1.00px;height:270.00px;background:#dcd8dc;"></div><div class="b" style="left:655.00px;top:274.00px;width:1.00px;height:270.00px;background:#dcd8dc;"></div><div class="b" style="left:723.00px;top:274.00px;width:1.00px;height:270.00px;background:#dcd8dc;"></div><div class="b" style="left:790.00px;top:274.00px;width:1.00px;height:270.00px;background:#dcd8dc;"></div><div class="b" style="left:858.00px;top:274.00px;width:1.00px;height:270.00px;background:#dcd8dc;"></div><div class="b" style="left:925.00px;top:274.00px;width:1.00px;height:270.00px;background:#dcd8dc;"></div><div class="b" style="left:993.00px;top:274.00px;width:1.00px;height:270.00px;background:#dcd8dc;"></div><div class="b" style="left:1060.00px;top:274.00px;width:1.00px;height:270.00px;background:#dcd8dc;"></div><div class="b" style="left:1128.00px;top:274.00px;width:1.00px;height:270.00px;background:#dcd8dc;"></div><div class="b" style="left:1195.00px;top:274.00px;width:1.00px;height:270.00px;background:#dcd8dc;"></div><div class="b" style="left:1263.00px;top:274.00px;width:1.00px;height:270.00px;background:#dcd8dc;"></div><div class="b" style="left:1330.00px;top:274.00px;width:1.00px;height:270.00px;background:#dcd8dc;"></div><div class="b" style="left:1398.00px;top:274.00px;width:1.00px;height:270.00px;background:#dcd8dc;"></div><div class="b" style="left:1465.00px;top:274.00px;width:1.00px;height:270.00px;background:#dcd8dc;"></div><div class="b" style="left:1533.00px;top:274.00px;width:1.00px;height:270.00px;background:#dcd8dc;"></div><div class="b" style="left:1600.00px;top:274.00px;width:1.00px;height:270.00px;background:#dcd8dc;"></div><div class="b" style="left:1668.00px;top:274.00px;width:1.00px;height:270.00px;background:#dcd8dc;"></div><div class="b" style="left:38px;top:285.00px;"><svg width="11" height="11" viewBox="0 0 11 11"><rect width="11" height="11" rx="1.6" fill="#f8612b"/><path d="M5.5 2.1V8.9M2.1 5.5H8.9" stroke="#fff" stroke-width="1.8"/></svg></div><div class="t" style="left:52.50px;top:287.00px;font-size:9px;line-height:9px;color:#111;-webkit-text-stroke:0.15px #111;">Standard Double Non Smoking</div><div class="b" style="left:181.00px;top:281.40px;width:17.30px;height:17.30px;background:#fff;border:1px solid #e4e4e4;border-radius:2.5px;box-sizing:border-box;"></div><div class="b" style="left:185.50px;top:285.60px;"><svg width="8" height="9.3" viewBox="0 0 8 9.3"><rect x="0" y="1.1" width="8" height="8.2" rx="0.5" fill="#5e5e5e"/><rect x="1.6" y="0" width="1.1" height="1.6" fill="#5e5e5e"/><rect x="5.3" y="0" width="1.1" height="1.6" fill="#5e5e5e"/><rect x="0.6" y="3.2" width="6.8" height="0.45" fill="#aaa"/><g fill="#f4f4f4"><rect x="1.0" y="4.4" width="1.4" height="1.3"/><rect x="3.3" y="4.4" width="1.4" height="1.3"/><rect x="5.6" y="4.4" width="1.4" height="1.3"/><rect x="1.0" y="6.6" width="1.4" height="1.3"/><rect x="3.3" y="6.6" width="1.4" height="1.3"/><rect x="5.6" y="6.6" width="1.4" height="1.3"/></g></svg></div><div class="b" style="left:323.30px;top:281.30px;width:23.40px;height:17.70px;background:#fff;border:1px solid #ebe6eb;border-radius:2px;box-sizing:border-box;"></div><div class="b" style="left:390.82px;top:281.30px;width:23.40px;height:17.70px;background:#fff;border:1px solid #ebe6eb;border-radius:2px;box-sizing:border-box;"></div><div class="b" style="left:458.35px;top:281.30px;width:23.40px;height:17.70px;background:#fff;border:1px solid #ebe6eb;border-radius:2px;box-sizing:border-box;"></div><div class="b" style="left:525.88px;top:281.30px;width:23.40px;height:17.70px;background:#fff;border:1px solid #ebe6eb;border-radius:2px;box-sizing:border-box;"></div><div class="b" style="left:593.40px;top:281.30px;width:23.40px;height:17.70px;background:#fff;border:1px solid #ebe6eb;border-radius:2px;box-sizing:border-box;"></div><div class="b" style="left:660.92px;top:281.30px;width:23.40px;height:17.70px;background:#fff;border:1px solid #ebe6eb;border-radius:2px;box-sizing:border-box;"></div><div class="b" style="left:728.45px;top:281.30px;width:23.40px;height:17.70px;background:#fff;border:1px solid #ebe6eb;border-radius:2px;box-sizing:border-box;"></div><div class="b" style="left:795.98px;top:281.30px;width:23.40px;height:17.70px;background:#fff;border:1px solid #ebe6eb;border-radius:2px;box-sizing:border-box;"></div><div class="b" style="left:863.50px;top:281.30px;width:23.40px;height:17.70px;background:#fff;border:1px solid #ebe6eb;border-radius:2px;box-sizing:border-box;"></div><div class="b" style="left:931.02px;top:281.30px;width:23.40px;height:17.70px;background:#fff;border:1px solid #ebe6eb;border-radius:2px;box-sizing:border-box;"></div><div class="b" style="left:998.55px;top:281.30px;width:23.40px;height:17.70px;background:#fff;border:1px solid #ebe6eb;border-radius:2px;box-sizing:border-box;"></div><div class="b" style="left:1066.08px;top:281.30px;width:23.40px;height:17.70px;background:#fff;border:1px solid #ebe6eb;border-radius:2px;box-sizing:border-box;"></div><div class="b" style="left:1133.60px;top:281.30px;width:23.40px;height:17.70px;background:#fff;border:1px solid #ebe6eb;border-radius:2px;box-sizing:border-box;"></div><div class="b" style="left:1201.12px;top:281.30px;width:23.40px;height:17.70px;background:#fff;border:1px solid #ebe6eb;border-radius:2px;box-sizing:border-box;"></div><div class="b" style="left:1268.65px;top:281.30px;width:23.40px;height:17.70px;background:#fff;border:1px solid #ebe6eb;border-radius:2px;box-sizing:border-box;"></div><div class="b" style="left:1336.17px;top:281.30px;width:23.40px;height:17.70px;background:#fff;border:1px solid #ebe6eb;border-radius:2px;box-sizing:border-box;"></div><div class="b" style="left:1403.70px;top:281.30px;width:23.40px;height:17.70px;background:#fff;border:1px solid #ebe6eb;border-radius:2px;box-sizing:border-box;"></div><div class="b" style="left:1471.23px;top:281.30px;width:23.40px;height:17.70px;background:#fff;border:1px solid #ebe6eb;border-radius:2px;box-sizing:border-box;"></div><div class="b" style="left:1538.75px;top:281.30px;width:23.40px;height:17.70px;background:#fff;border:1px solid #ebe6eb;border-radius:2px;box-sizing:border-box;"></div><div class="b" style="left:1606.28px;top:281.30px;width:23.40px;height:17.70px;background:#fff;border:1px solid #ebe6eb;border-radius:2px;box-sizing:border-box;"></div><div class="b" style="left:1673.80px;top:281.30px;width:23.40px;height:17.70px;background:#fff;border:1px solid #ebe6eb;border-radius:2px;box-sizing:border-box;"></div><div class="b" style="left:38px;top:319.00px;"><svg width="11" height="11" viewBox="0 0 11 11"><rect width="11" height="11" rx="1.6" fill="#f8612b"/><path d="M5.5 2.1V8.9M2.1 5.5H8.9" stroke="#fff" stroke-width="1.8"/></svg></div><div class="t" style="left:52.50px;top:321.00px;font-size:9px;line-height:9px;color:#111;-webkit-text-stroke:0.15px #111;">Standard Double Smoking</div><div class="b" style="left:162.30px;top:315.40px;width:17.30px;height:17.30px;background:#fff;border:1px solid #e4e4e4;border-radius:2.5px;box-sizing:border-box;"></div><div class="b" style="left:166.80px;top:319.60px;"><svg width="8" height="9.3" viewBox="0 0 8 9.3"><rect x="0" y="1.1" width="8" height="8.2" rx="0.5" fill="#5e5e5e"/><rect x="1.6" y="0" width="1.1" height="1.6" fill="#5e5e5e"/><rect x="5.3" y="0" width="1.1" height="1.6" fill="#5e5e5e"/><rect x="0.6" y="3.2" width="6.8" height="0.45" fill="#aaa"/><g fill="#f4f4f4"><rect x="1.0" y="4.4" width="1.4" height="1.3"/><rect x="3.3" y="4.4" width="1.4" height="1.3"/><rect x="5.6" y="4.4" width="1.4" height="1.3"/><rect x="1.0" y="6.6" width="1.4" height="1.3"/><rect x="3.3" y="6.6" width="1.4" height="1.3"/><rect x="5.6" y="6.6" width="1.4" height="1.3"/></g></svg></div><div class="b" style="left:323.30px;top:315.30px;width:23.40px;height:17.70px;background:#fff;border:1px solid #ebe6eb;border-radius:2px;box-sizing:border-box;"></div><div class="b" style="left:390.82px;top:315.30px;width:23.40px;height:17.70px;background:#fff;border:1px solid #ebe6eb;border-radius:2px;box-sizing:border-box;"></div><div class="b" style="left:458.35px;top:315.30px;width:23.40px;height:17.70px;background:#fff;border:1px solid #ebe6eb;border-radius:2px;box-sizing:border-box;"></div><div class="b" style="left:525.88px;top:315.30px;width:23.40px;height:17.70px;background:#fff;border:1px solid #ebe6eb;border-radius:2px;box-sizing:border-box;"></div><div class="b" style="left:593.40px;top:315.30px;width:23.40px;height:17.70px;background:#fff;border:1px solid #ebe6eb;border-radius:2px;box-sizing:border-box;"></div><div class="b" style="left:660.92px;top:315.30px;width:23.40px;height:17.70px;background:#fff;border:1px solid #ebe6eb;border-radius:2px;box-sizing:border-box;"></div><div class="b" style="left:728.45px;top:315.30px;width:23.40px;height:17.70px;background:#fff;border:1px solid #ebe6eb;border-radius:2px;box-sizing:border-box;"></div><div class="b" style="left:795.98px;top:315.30px;width:23.40px;height:17.70px;background:#fff;border:1px solid #ebe6eb;border-radius:2px;box-sizing:border-box;"></div><div class="b" style="left:863.50px;top:315.30px;width:23.40px;height:17.70px;background:#fff;border:1px solid #ebe6eb;border-radius:2px;box-sizing:border-box;"></div><div class="b" style="left:931.02px;top:315.30px;width:23.40px;height:17.70px;background:#fff;border:1px solid #ebe6eb;border-radius:2px;box-sizing:border-box;"></div><div class="b" style="left:998.55px;top:315.30px;width:23.40px;height:17.70px;background:#fff;border:1px solid #ebe6eb;border-radius:2px;box-sizing:border-box;"></div><div class="b" style="left:1066.08px;top:315.30px;width:23.40px;height:17.70px;background:#fff;border:1px solid #ebe6eb;border-radius:2px;box-sizing:border-box;"></div><div class="b" style="left:1133.60px;top:315.30px;width:23.40px;height:17.70px;background:#fff;border:1px solid #ebe6eb;border-radius:2px;box-sizing:border-box;"></div><div class="b" style="left:1201.12px;top:315.30px;width:23.40px;height:17.70px;background:#fff;border:1px solid #ebe6eb;border-radius:2px;box-sizing:border-box;"></div><div class="b" style="left:1268.65px;top:315.30px;width:23.40px;height:17.70px;background:#fff;border:1px solid #ebe6eb;border-radius:2px;box-sizing:border-box;"></div><div class="b" style="left:1336.17px;top:315.30px;width:23.40px;height:17.70px;background:#fff;border:1px solid #ebe6eb;border-radius:2px;box-sizing:border-box;"></div><div class="b" style="left:1403.70px;top:315.30px;width:23.40px;height:17.70px;background:#fff;border:1px solid #ebe6eb;border-radius:2px;box-sizing:border-box;"></div><div class="b" style="left:1471.23px;top:315.30px;width:23.40px;height:17.70px;background:#fff;border:1px solid #ebe6eb;border-radius:2px;box-sizing:border-box;"></div><div class="b" style="left:1538.75px;top:315.30px;width:23.40px;height:17.70px;background:#fff;border:1px solid #ebe6eb;border-radius:2px;box-sizing:border-box;"></div><div class="b" style="left:1606.28px;top:315.30px;width:23.40px;height:17.70px;background:#fff;border:1px solid #ebe6eb;border-radius:2px;box-sizing:border-box;"></div><div class="b" style="left:1673.80px;top:315.30px;width:23.40px;height:17.70px;background:#fff;border:1px solid #ebe6eb;border-radius:2px;box-sizing:border-box;"></div><div class="b" style="left:38px;top:353.00px;"><svg width="11" height="11" viewBox="0 0 11 11"><rect width="11" height="11" rx="1.6" fill="#f8612b"/><path d="M5.5 2.1V8.9M2.1 5.5H8.9" stroke="#fff" stroke-width="1.8"/></svg></div><div class="t" style="left:52.50px;top:355.00px;font-size:9px;line-height:9px;color:#111;-webkit-text-stroke:0.15px #111;">Standard Economy Double Non S...</div><div class="b" style="left:206.10px;top:349.40px;width:17.30px;height:17.30px;background:#fff;border:1px solid #e4e4e4;border-radius:2.5px;box-sizing:border-box;"></div><div class="b" style="left:210.60px;top:353.60px;"><svg width="8" height="9.3" viewBox="0 0 8 9.3"><rect x="0" y="1.1" width="8" height="8.2" rx="0.5" fill="#5e5e5e"/><rect x="1.6" y="0" width="1.1" height="1.6" fill="#5e5e5e"/><rect x="5.3" y="0" width="1.1" height="1.6" fill="#5e5e5e"/><rect x="0.6" y="3.2" width="6.8" height="0.45" fill="#aaa"/><g fill="#f4f4f4"><rect x="1.0" y="4.4" width="1.4" height="1.3"/><rect x="3.3" y="4.4" width="1.4" height="1.3"/><rect x="5.6" y="4.4" width="1.4" height="1.3"/><rect x="1.0" y="6.6" width="1.4" height="1.3"/><rect x="3.3" y="6.6" width="1.4" height="1.3"/><rect x="5.6" y="6.6" width="1.4" height="1.3"/></g></svg></div><div class="b" style="left:323.30px;top:349.30px;width:23.40px;height:17.70px;background:#fff;border:1px solid #ebe6eb;border-radius:2px;box-sizing:border-box;"></div><div class="b" style="left:390.82px;top:349.30px;width:23.40px;height:17.70px;background:#fff;border:1px solid #ebe6eb;border-radius:2px;box-sizing:border-box;"></div><div class="b" style="left:458.35px;top:349.30px;width:23.40px;height:17.70px;background:#fff;border:1px solid #ebe6eb;border-radius:2px;box-sizing:border-box;"></div><div class="b" style="left:525.88px;top:349.30px;width:23.40px;height:17.70px;background:#fff;border:1px solid #ebe6eb;border-radius:2px;box-sizing:border-box;"></div><div class="b" style="left:593.40px;top:349.30px;width:23.40px;height:17.70px;background:#fff;border:1px solid #ebe6eb;border-radius:2px;box-sizing:border-box;"></div><div class="b" style="left:660.92px;top:349.30px;width:23.40px;height:17.70px;background:#fff;border:1px solid #ebe6eb;border-radius:2px;box-sizing:border-box;"></div><div class="b" style="left:728.45px;top:349.30px;width:23.40px;height:17.70px;background:#fff;border:1px solid #ebe6eb;border-radius:2px;box-sizing:border-box;"></div><div class="b" style="left:795.98px;top:349.30px;width:23.40px;height:17.70px;background:#fff;border:1px solid #ebe6eb;border-radius:2px;box-sizing:border-box;"></div><div class="b" style="left:863.50px;top:349.30px;width:23.40px;height:17.70px;background:#fff;border:1px solid #ebe6eb;border-radius:2px;box-sizing:border-box;"></div><div class="b" style="left:931.02px;top:349.30px;width:23.40px;height:17.70px;background:#fff;border:1px solid #ebe6eb;border-radius:2px;box-sizing:border-box;"></div><div class="b" style="left:998.55px;top:349.30px;width:23.40px;height:17.70px;background:#fff;border:1px solid #ebe6eb;border-radius:2px;box-sizing:border-box;"></div><div class="b" style="left:1066.08px;top:349.30px;width:23.40px;height:17.70px;background:#fff;border:1px solid #ebe6eb;border-radius:2px;box-sizing:border-box;"></div><div class="b" style="left:1133.60px;top:349.30px;width:23.40px;height:17.70px;background:#fff;border:1px solid #ebe6eb;border-radius:2px;box-sizing:border-box;"></div><div class="b" style="left:1201.12px;top:349.30px;width:23.40px;height:17.70px;background:#fff;border:1px solid #ebe6eb;border-radius:2px;box-sizing:border-box;"></div><div class="b" style="left:1268.65px;top:349.30px;width:23.40px;height:17.70px;background:#fff;border:1px solid #ebe6eb;border-radius:2px;box-sizing:border-box;"></div><div class="b" style="left:1336.17px;top:349.30px;width:23.40px;height:17.70px;background:#fff;border:1px solid #ebe6eb;border-radius:2px;box-sizing:border-box;"></div><div class="b" style="left:1403.70px;top:349.30px;width:23.40px;height:17.70px;background:#fff;border:1px solid #ebe6eb;border-radius:2px;box-sizing:border-box;"></div><div class="b" style="left:1471.23px;top:349.30px;width:23.40px;height:17.70px;background:#fff;border:1px solid #ebe6eb;border-radius:2px;box-sizing:border-box;"></div><div class="b" style="left:1538.75px;top:349.30px;width:23.40px;height:17.70px;background:#fff;border:1px solid #ebe6eb;border-radius:2px;box-sizing:border-box;"></div><div class="b" style="left:1606.28px;top:349.30px;width:23.40px;height:17.70px;background:#fff;border:1px solid #ebe6eb;border-radius:2px;box-sizing:border-box;"></div><div class="b" style="left:1673.80px;top:349.30px;width:23.40px;height:17.70px;background:#fff;border:1px solid #ebe6eb;border-radius:2px;box-sizing:border-box;"></div><div class="b" style="left:38px;top:387.00px;"><svg width="11" height="11" viewBox="0 0 11 11"><rect width="11" height="11" rx="1.6" fill="#f8612b"/><path d="M5.5 2.1V8.9M2.1 5.5H8.9" stroke="#fff" stroke-width="1.8"/></svg></div><div class="t" style="left:52.50px;top:388.00px;font-size:9px;line-height:9px;color:#111;-webkit-text-stroke:0.15px #111;">Standard Economy Double Smoking</div><div class="b" style="left:203.30px;top:383.40px;width:17.30px;height:17.30px;background:#fff;border:1px solid #e4e4e4;border-radius:2.5px;box-sizing:border-box;"></div><div class="b" style="left:207.80px;top:387.60px;"><svg width="8" height="9.3" viewBox="0 0 8 9.3"><rect x="0" y="1.1" width="8" height="8.2" rx="0.5" fill="#5e5e5e"/><rect x="1.6" y="0" width="1.1" height="1.6" fill="#5e5e5e"/><rect x="5.3" y="0" width="1.1" height="1.6" fill="#5e5e5e"/><rect x="0.6" y="3.2" width="6.8" height="0.45" fill="#aaa"/><g fill="#f4f4f4"><rect x="1.0" y="4.4" width="1.4" height="1.3"/><rect x="3.3" y="4.4" width="1.4" height="1.3"/><rect x="5.6" y="4.4" width="1.4" height="1.3"/><rect x="1.0" y="6.6" width="1.4" height="1.3"/><rect x="3.3" y="6.6" width="1.4" height="1.3"/><rect x="5.6" y="6.6" width="1.4" height="1.3"/></g></svg></div><div class="b" style="left:323.30px;top:383.30px;width:23.40px;height:17.70px;background:#fff;border:1px solid #ebe6eb;border-radius:2px;box-sizing:border-box;"></div><div class="b" style="left:390.82px;top:383.30px;width:23.40px;height:17.70px;background:#fff;border:1px solid #ebe6eb;border-radius:2px;box-sizing:border-box;"></div><div class="b" style="left:458.35px;top:383.30px;width:23.40px;height:17.70px;background:#fff;border:1px solid #ebe6eb;border-radius:2px;box-sizing:border-box;"></div><div class="b" style="left:525.88px;top:383.30px;width:23.40px;height:17.70px;background:#fff;border:1px solid #ebe6eb;border-radius:2px;box-sizing:border-box;"></div><div class="b" style="left:593.40px;top:383.30px;width:23.40px;height:17.70px;background:#fff;border:1px solid #ebe6eb;border-radius:2px;box-sizing:border-box;"></div><div class="b" style="left:660.92px;top:383.30px;width:23.40px;height:17.70px;background:#fff;border:1px solid #ebe6eb;border-radius:2px;box-sizing:border-box;"></div><div class="b" style="left:728.45px;top:383.30px;width:23.40px;height:17.70px;background:#fff;border:1px solid #ebe6eb;border-radius:2px;box-sizing:border-box;"></div><div class="b" style="left:795.98px;top:383.30px;width:23.40px;height:17.70px;background:#fff;border:1px solid #ebe6eb;border-radius:2px;box-sizing:border-box;"></div><div class="b" style="left:863.50px;top:383.30px;width:23.40px;height:17.70px;background:#fff;border:1px solid #ebe6eb;border-radius:2px;box-sizing:border-box;"></div><div class="b" style="left:931.02px;top:383.30px;width:23.40px;height:17.70px;background:#fff;border:1px solid #ebe6eb;border-radius:2px;box-sizing:border-box;"></div><div class="b" style="left:998.55px;top:383.30px;width:23.40px;height:17.70px;background:#fff;border:1px solid #ebe6eb;border-radius:2px;box-sizing:border-box;"></div><div class="b" style="left:1066.08px;top:383.30px;width:23.40px;height:17.70px;background:#fff;border:1px solid #ebe6eb;border-radius:2px;box-sizing:border-box;"></div><div class="b" style="left:1133.60px;top:383.30px;width:23.40px;height:17.70px;background:#fff;border:1px solid #ebe6eb;border-radius:2px;box-sizing:border-box;"></div><div class="b" style="left:1201.12px;top:383.30px;width:23.40px;height:17.70px;background:#fff;border:1px solid #ebe6eb;border-radius:2px;box-sizing:border-box;"></div><div class="b" style="left:1268.65px;top:383.30px;width:23.40px;height:17.70px;background:#fff;border:1px solid #ebe6eb;border-radius:2px;box-sizing:border-box;"></div><div class="b" style="left:1336.17px;top:383.30px;width:23.40px;height:17.70px;background:#fff;border:1px solid #ebe6eb;border-radius:2px;box-sizing:border-box;"></div><div class="b" style="left:1403.70px;top:383.30px;width:23.40px;height:17.70px;background:#fff;border:1px solid #ebe6eb;border-radius:2px;box-sizing:border-box;"></div><div class="b" style="left:1471.23px;top:383.30px;width:23.40px;height:17.70px;background:#fff;border:1px solid #ebe6eb;border-radius:2px;box-sizing:border-box;"></div><div class="b" style="left:1538.75px;top:383.30px;width:23.40px;height:17.70px;background:#fff;border:1px solid #ebe6eb;border-radius:2px;box-sizing:border-box;"></div><div class="b" style="left:1606.28px;top:383.30px;width:23.40px;height:17.70px;background:#fff;border:1px solid #ebe6eb;border-radius:2px;box-sizing:border-box;"></div><div class="b" style="left:1673.80px;top:383.30px;width:23.40px;height:17.70px;background:#fff;border:1px solid #ebe6eb;border-radius:2px;box-sizing:border-box;"></div><div class="b" style="left:38px;top:420.00px;"><svg width="11" height="11" viewBox="0 0 11 11"><rect width="11" height="11" rx="1.6" fill="#f8612b"/><path d="M5.5 2.1V8.9M2.1 5.5H8.9" stroke="#fff" stroke-width="1.8"/></svg></div><div class="t" style="left:52.50px;top:422.00px;font-size:9px;line-height:9px;color:#111;-webkit-text-stroke:0.15px #111;">Standard Single Non Smoking</div><div class="b" style="left:177.70px;top:416.40px;width:17.30px;height:17.30px;background:#fff;border:1px solid #e4e4e4;border-radius:2.5px;box-sizing:border-box;"></div><div class="b" style="left:182.20px;top:420.60px;"><svg width="8" height="9.3" viewBox="0 0 8 9.3"><rect x="0" y="1.1" width="8" height="8.2" rx="0.5" fill="#5e5e5e"/><rect x="1.6" y="0" width="1.1" height="1.6" fill="#5e5e5e"/><rect x="5.3" y="0" width="1.1" height="1.6" fill="#5e5e5e"/><rect x="0.6" y="3.2" width="6.8" height="0.45" fill="#aaa"/><g fill="#f4f4f4"><rect x="1.0" y="4.4" width="1.4" height="1.3"/><rect x="3.3" y="4.4" width="1.4" height="1.3"/><rect x="5.6" y="4.4" width="1.4" height="1.3"/><rect x="1.0" y="6.6" width="1.4" height="1.3"/><rect x="3.3" y="6.6" width="1.4" height="1.3"/><rect x="5.6" y="6.6" width="1.4" height="1.3"/></g></svg></div><div class="b" style="left:323.30px;top:416.30px;width:23.40px;height:17.70px;background:#fff;border:1px solid #ebe6eb;border-radius:2px;box-sizing:border-box;"></div><div class="b" style="left:390.82px;top:416.30px;width:23.40px;height:17.70px;background:#fff;border:1px solid #ebe6eb;border-radius:2px;box-sizing:border-box;"></div><div class="b" style="left:458.35px;top:416.30px;width:23.40px;height:17.70px;background:#fff;border:1px solid #ebe6eb;border-radius:2px;box-sizing:border-box;"></div><div class="b" style="left:525.88px;top:416.30px;width:23.40px;height:17.70px;background:#fff;border:1px solid #ebe6eb;border-radius:2px;box-sizing:border-box;"></div><div class="b" style="left:593.40px;top:416.30px;width:23.40px;height:17.70px;background:#fff;border:1px solid #ebe6eb;border-radius:2px;box-sizing:border-box;"></div><div class="b" style="left:660.92px;top:416.30px;width:23.40px;height:17.70px;background:#fff;border:1px solid #ebe6eb;border-radius:2px;box-sizing:border-box;"></div><div class="b" style="left:728.45px;top:416.30px;width:23.40px;height:17.70px;background:#fff;border:1px solid #ebe6eb;border-radius:2px;box-sizing:border-box;"></div><div class="b" style="left:795.98px;top:416.30px;width:23.40px;height:17.70px;background:#fff;border:1px solid #ebe6eb;border-radius:2px;box-sizing:border-box;"></div><div class="b" style="left:863.50px;top:416.30px;width:23.40px;height:17.70px;background:#fff;border:1px solid #ebe6eb;border-radius:2px;box-sizing:border-box;"></div><div class="b" style="left:931.02px;top:416.30px;width:23.40px;height:17.70px;background:#fff;border:1px solid #ebe6eb;border-radius:2px;box-sizing:border-box;"></div><div class="b" style="left:998.55px;top:416.30px;width:23.40px;height:17.70px;background:#fff;border:1px solid #ebe6eb;border-radius:2px;box-sizing:border-box;"></div><div class="b" style="left:1066.08px;top:416.30px;width:23.40px;height:17.70px;background:#fff;border:1px solid #ebe6eb;border-radius:2px;box-sizing:border-box;"></div><div class="b" style="left:1133.60px;top:416.30px;width:23.40px;height:17.70px;background:#fff;border:1px solid #ebe6eb;border-radius:2px;box-sizing:border-box;"></div><div class="b" style="left:1201.12px;top:416.30px;width:23.40px;height:17.70px;background:#fff;border:1px solid #ebe6eb;border-radius:2px;box-sizing:border-box;"></div><div class="b" style="left:1268.65px;top:416.30px;width:23.40px;height:17.70px;background:#fff;border:1px solid #ebe6eb;border-radius:2px;box-sizing:border-box;"></div><div class="b" style="left:1336.17px;top:416.30px;width:23.40px;height:17.70px;background:#fff;border:1px solid #ebe6eb;border-radius:2px;box-sizing:border-box;"></div><div class="b" style="left:1403.70px;top:416.30px;width:23.40px;height:17.70px;background:#fff;border:1px solid #ebe6eb;border-radius:2px;box-sizing:border-box;"></div><div class="b" style="left:1471.23px;top:416.30px;width:23.40px;height:17.70px;background:#fff;border:1px solid #ebe6eb;border-radius:2px;box-sizing:border-box;"></div><div class="b" style="left:1538.75px;top:416.30px;width:23.40px;height:17.70px;background:#fff;border:1px solid #ebe6eb;border-radius:2px;box-sizing:border-box;"></div><div class="b" style="left:1606.28px;top:416.30px;width:23.40px;height:17.70px;background:#fff;border:1px solid #ebe6eb;border-radius:2px;box-sizing:border-box;"></div><div class="b" style="left:1673.80px;top:416.30px;width:23.40px;height:17.70px;background:#fff;border:1px solid #ebe6eb;border-radius:2px;box-sizing:border-box;"></div><div class="b" style="left:38px;top:454.00px;"><svg width="11" height="11" viewBox="0 0 11 11"><rect width="11" height="11" rx="1.6" fill="#f8612b"/><path d="M5.5 2.1V8.9M2.1 5.5H8.9" stroke="#fff" stroke-width="1.8"/></svg></div><div class="t" style="left:52.50px;top:456.00px;font-size:9px;line-height:9px;color:#111;-webkit-text-stroke:0.15px #111;">Standard Single Smoking</div><div class="b" style="left:158.70px;top:450.40px;width:17.30px;height:17.30px;background:#fff;border:1px solid #e4e4e4;border-radius:2.5px;box-sizing:border-box;"></div><div class="b" style="left:163.20px;top:454.60px;"><svg width="8" height="9.3" viewBox="0 0 8 9.3"><rect x="0" y="1.1" width="8" height="8.2" rx="0.5" fill="#5e5e5e"/><rect x="1.6" y="0" width="1.1" height="1.6" fill="#5e5e5e"/><rect x="5.3" y="0" width="1.1" height="1.6" fill="#5e5e5e"/><rect x="0.6" y="3.2" width="6.8" height="0.45" fill="#aaa"/><g fill="#f4f4f4"><rect x="1.0" y="4.4" width="1.4" height="1.3"/><rect x="3.3" y="4.4" width="1.4" height="1.3"/><rect x="5.6" y="4.4" width="1.4" height="1.3"/><rect x="1.0" y="6.6" width="1.4" height="1.3"/><rect x="3.3" y="6.6" width="1.4" height="1.3"/><rect x="5.6" y="6.6" width="1.4" height="1.3"/></g></svg></div><div class="b" style="left:323.30px;top:450.30px;width:23.40px;height:17.70px;background:#fff;border:1px solid #ebe6eb;border-radius:2px;box-sizing:border-box;"></div><div class="b" style="left:390.82px;top:450.30px;width:23.40px;height:17.70px;background:#fff;border:1px solid #ebe6eb;border-radius:2px;box-sizing:border-box;"></div><div class="b" style="left:458.35px;top:450.30px;width:23.40px;height:17.70px;background:#fff;border:1px solid #ebe6eb;border-radius:2px;box-sizing:border-box;"></div><div class="b" style="left:525.88px;top:450.30px;width:23.40px;height:17.70px;background:#fff;border:1px solid #ebe6eb;border-radius:2px;box-sizing:border-box;"></div><div class="b" style="left:593.40px;top:450.30px;width:23.40px;height:17.70px;background:#fff;border:1px solid #ebe6eb;border-radius:2px;box-sizing:border-box;"></div><div class="b" style="left:660.92px;top:450.30px;width:23.40px;height:17.70px;background:#fff;border:1px solid #ebe6eb;border-radius:2px;box-sizing:border-box;"></div><div class="b" style="left:728.45px;top:450.30px;width:23.40px;height:17.70px;background:#fff;border:1px solid #ebe6eb;border-radius:2px;box-sizing:border-box;"></div><div class="b" style="left:795.98px;top:450.30px;width:23.40px;height:17.70px;background:#fff;border:1px solid #ebe6eb;border-radius:2px;box-sizing:border-box;"></div><div class="b" style="left:863.50px;top:450.30px;width:23.40px;height:17.70px;background:#fff;border:1px solid #ebe6eb;border-radius:2px;box-sizing:border-box;"></div><div class="b" style="left:931.02px;top:450.30px;width:23.40px;height:17.70px;background:#fff;border:1px solid #ebe6eb;border-radius:2px;box-sizing:border-box;"></div><div class="b" style="left:998.55px;top:450.30px;width:23.40px;height:17.70px;background:#fff;border:1px solid #ebe6eb;border-radius:2px;box-sizing:border-box;"></div><div class="b" style="left:1066.08px;top:450.30px;width:23.40px;height:17.70px;background:#fff;border:1px solid #ebe6eb;border-radius:2px;box-sizing:border-box;"></div><div class="b" style="left:1133.60px;top:450.30px;width:23.40px;height:17.70px;background:#fff;border:1px solid #ebe6eb;border-radius:2px;box-sizing:border-box;"></div><div class="b" style="left:1201.12px;top:450.30px;width:23.40px;height:17.70px;background:#fff;border:1px solid #ebe6eb;border-radius:2px;box-sizing:border-box;"></div><div class="b" style="left:1268.65px;top:450.30px;width:23.40px;height:17.70px;background:#fff;border:1px solid #ebe6eb;border-radius:2px;box-sizing:border-box;"></div><div class="b" style="left:1336.17px;top:450.30px;width:23.40px;height:17.70px;background:#fff;border:1px solid #ebe6eb;border-radius:2px;box-sizing:border-box;"></div><div class="b" style="left:1403.70px;top:450.30px;width:23.40px;height:17.70px;background:#fff;border:1px solid #ebe6eb;border-radius:2px;box-sizing:border-box;"></div><div class="b" style="left:1471.23px;top:450.30px;width:23.40px;height:17.70px;background:#fff;border:1px solid #ebe6eb;border-radius:2px;box-sizing:border-box;"></div><div class="b" style="left:1538.75px;top:450.30px;width:23.40px;height:17.70px;background:#fff;border:1px solid #ebe6eb;border-radius:2px;box-sizing:border-box;"></div><div class="b" style="left:1606.28px;top:450.30px;width:23.40px;height:17.70px;background:#fff;border:1px solid #ebe6eb;border-radius:2px;box-sizing:border-box;"></div><div class="b" style="left:1673.80px;top:450.30px;width:23.40px;height:17.70px;background:#fff;border:1px solid #ebe6eb;border-radius:2px;box-sizing:border-box;"></div><div class="b" style="left:38px;top:488.00px;"><svg width="11" height="11" viewBox="0 0 11 11"><rect width="11" height="11" rx="1.6" fill="#f8612b"/><path d="M5.5 2.1V8.9M2.1 5.5H8.9" stroke="#fff" stroke-width="1.8"/></svg></div><div class="t" style="left:52.50px;top:490.00px;font-size:9px;line-height:9px;color:#111;-webkit-text-stroke:0.15px #111;">Standard Twin Non Smoking</div><div class="b" style="left:172.00px;top:484.40px;width:17.30px;height:17.30px;background:#fff;border:1px solid #e4e4e4;border-radius:2.5px;box-sizing:border-box;"></div><div class="b" style="left:176.50px;top:488.60px;"><svg width="8" height="9.3" viewBox="0 0 8 9.3"><rect x="0" y="1.1" width="8" height="8.2" rx="0.5" fill="#5e5e5e"/><rect x="1.6" y="0" width="1.1" height="1.6" fill="#5e5e5e"/><rect x="5.3" y="0" width="1.1" height="1.6" fill="#5e5e5e"/><rect x="0.6" y="3.2" width="6.8" height="0.45" fill="#aaa"/><g fill="#f4f4f4"><rect x="1.0" y="4.4" width="1.4" height="1.3"/><rect x="3.3" y="4.4" width="1.4" height="1.3"/><rect x="5.6" y="4.4" width="1.4" height="1.3"/><rect x="1.0" y="6.6" width="1.4" height="1.3"/><rect x="3.3" y="6.6" width="1.4" height="1.3"/><rect x="5.6" y="6.6" width="1.4" height="1.3"/></g></svg></div><div class="b" style="left:323.30px;top:484.30px;width:23.40px;height:17.70px;background:#fff;border:1px solid #ebe6eb;border-radius:2px;box-sizing:border-box;"></div><div class="b" style="left:390.82px;top:484.30px;width:23.40px;height:17.70px;background:#fff;border:1px solid #ebe6eb;border-radius:2px;box-sizing:border-box;"></div><div class="b" style="left:458.35px;top:484.30px;width:23.40px;height:17.70px;background:#fff;border:1px solid #ebe6eb;border-radius:2px;box-sizing:border-box;"></div><div class="b" style="left:525.88px;top:484.30px;width:23.40px;height:17.70px;background:#fff;border:1px solid #ebe6eb;border-radius:2px;box-sizing:border-box;"></div><div class="b" style="left:593.40px;top:484.30px;width:23.40px;height:17.70px;background:#fff;border:1px solid #ebe6eb;border-radius:2px;box-sizing:border-box;"></div><div class="b" style="left:660.92px;top:484.30px;width:23.40px;height:17.70px;background:#fff;border:1px solid #ebe6eb;border-radius:2px;box-sizing:border-box;"></div><div class="b" style="left:728.45px;top:484.30px;width:23.40px;height:17.70px;background:#fff;border:1px solid #ebe6eb;border-radius:2px;box-sizing:border-box;"></div><div class="b" style="left:795.98px;top:484.30px;width:23.40px;height:17.70px;background:#fff;border:1px solid #ebe6eb;border-radius:2px;box-sizing:border-box;"></div><div class="b" style="left:863.50px;top:484.30px;width:23.40px;height:17.70px;background:#fff;border:1px solid #ebe6eb;border-radius:2px;box-sizing:border-box;"></div><div class="b" style="left:931.02px;top:484.30px;width:23.40px;height:17.70px;background:#fff;border:1px solid #ebe6eb;border-radius:2px;box-sizing:border-box;"></div><div class="b" style="left:998.55px;top:484.30px;width:23.40px;height:17.70px;background:#fff;border:1px solid #ebe6eb;border-radius:2px;box-sizing:border-box;"></div><div class="b" style="left:1066.08px;top:484.30px;width:23.40px;height:17.70px;background:#fff;border:1px solid #ebe6eb;border-radius:2px;box-sizing:border-box;"></div><div class="b" style="left:1133.60px;top:484.30px;width:23.40px;height:17.70px;background:#fff;border:1px solid #ebe6eb;border-radius:2px;box-sizing:border-box;"></div><div class="b" style="left:1201.12px;top:484.30px;width:23.40px;height:17.70px;background:#fff;border:1px solid #ebe6eb;border-radius:2px;box-sizing:border-box;"></div><div class="b" style="left:1268.65px;top:484.30px;width:23.40px;height:17.70px;background:#fff;border:1px solid #ebe6eb;border-radius:2px;box-sizing:border-box;"></div><div class="b" style="left:1336.17px;top:484.30px;width:23.40px;height:17.70px;background:#fff;border:1px solid #ebe6eb;border-radius:2px;box-sizing:border-box;"></div><div class="b" style="left:1403.70px;top:484.30px;width:23.40px;height:17.70px;background:#fff;border:1px solid #ebe6eb;border-radius:2px;box-sizing:border-box;"></div><div class="b" style="left:1471.23px;top:484.30px;width:23.40px;height:17.70px;background:#fff;border:1px solid #ebe6eb;border-radius:2px;box-sizing:border-box;"></div><div class="b" style="left:1538.75px;top:484.30px;width:23.40px;height:17.70px;background:#fff;border:1px solid #ebe6eb;border-radius:2px;box-sizing:border-box;"></div><div class="b" style="left:1606.28px;top:484.30px;width:23.40px;height:17.70px;background:#fff;border:1px solid #ebe6eb;border-radius:2px;box-sizing:border-box;"></div><div class="b" style="left:1673.80px;top:484.30px;width:23.40px;height:17.70px;background:#fff;border:1px solid #ebe6eb;border-radius:2px;box-sizing:border-box;"></div><div class="b" style="left:38px;top:522.00px;"><svg width="11" height="11" viewBox="0 0 11 11"><rect width="11" height="11" rx="1.6" fill="#f8612b"/><path d="M5.5 2.1V8.9M2.1 5.5H8.9" stroke="#fff" stroke-width="1.8"/></svg></div><div class="t" style="left:52.50px;top:523.00px;font-size:9px;line-height:9px;color:#111;-webkit-text-stroke:0.15px #111;">Standard Twin Smoking</div><div class="b" style="left:152.70px;top:518.40px;width:17.30px;height:17.30px;background:#fff;border:1px solid #e4e4e4;border-radius:2.5px;box-sizing:border-box;"></div><div class="b" style="left:157.20px;top:522.60px;"><svg width="8" height="9.3" viewBox="0 0 8 9.3"><rect x="0" y="1.1" width="8" height="8.2" rx="0.5" fill="#5e5e5e"/><rect x="1.6" y="0" width="1.1" height="1.6" fill="#5e5e5e"/><rect x="5.3" y="0" width="1.1" height="1.6" fill="#5e5e5e"/><rect x="0.6" y="3.2" width="6.8" height="0.45" fill="#aaa"/><g fill="#f4f4f4"><rect x="1.0" y="4.4" width="1.4" height="1.3"/><rect x="3.3" y="4.4" width="1.4" height="1.3"/><rect x="5.6" y="4.4" width="1.4" height="1.3"/><rect x="1.0" y="6.6" width="1.4" height="1.3"/><rect x="3.3" y="6.6" width="1.4" height="1.3"/><rect x="5.6" y="6.6" width="1.4" height="1.3"/></g></svg></div><div class="b" style="left:323.30px;top:518.30px;width:23.40px;height:17.70px;background:#fff;border:1px solid #ebe6eb;border-radius:2px;box-sizing:border-box;"></div><div class="b" style="left:390.82px;top:518.30px;width:23.40px;height:17.70px;background:#fff;border:1px solid #ebe6eb;border-radius:2px;box-sizing:border-box;"></div><div class="b" style="left:458.35px;top:518.30px;width:23.40px;height:17.70px;background:#fff;border:1px solid #ebe6eb;border-radius:2px;box-sizing:border-box;"></div><div class="b" style="left:525.88px;top:518.30px;width:23.40px;height:17.70px;background:#fff;border:1px solid #ebe6eb;border-radius:2px;box-sizing:border-box;"></div><div class="b" style="left:593.40px;top:518.30px;width:23.40px;height:17.70px;background:#fff;border:1px solid #ebe6eb;border-radius:2px;box-sizing:border-box;"></div><div class="b" style="left:660.92px;top:518.30px;width:23.40px;height:17.70px;background:#fff;border:1px solid #ebe6eb;border-radius:2px;box-sizing:border-box;"></div><div class="b" style="left:728.45px;top:518.30px;width:23.40px;height:17.70px;background:#fff;border:1px solid #ebe6eb;border-radius:2px;box-sizing:border-box;"></div><div class="b" style="left:795.98px;top:518.30px;width:23.40px;height:17.70px;background:#fff;border:1px solid #ebe6eb;border-radius:2px;box-sizing:border-box;"></div><div class="b" style="left:863.50px;top:518.30px;width:23.40px;height:17.70px;background:#fff;border:1px solid #ebe6eb;border-radius:2px;box-sizing:border-box;"></div><div class="b" style="left:931.02px;top:518.30px;width:23.40px;height:17.70px;background:#fff;border:1px solid #ebe6eb;border-radius:2px;box-sizing:border-box;"></div><div class="b" style="left:998.55px;top:518.30px;width:23.40px;height:17.70px;background:#fff;border:1px solid #ebe6eb;border-radius:2px;box-sizing:border-box;"></div><div class="b" style="left:1066.08px;top:518.30px;width:23.40px;height:17.70px;background:#fff;border:1px solid #ebe6eb;border-radius:2px;box-sizing:border-box;"></div><div class="b" style="left:1133.60px;top:518.30px;width:23.40px;height:17.70px;background:#fff;border:1px solid #ebe6eb;border-radius:2px;box-sizing:border-box;"></div><div class="b" style="left:1201.12px;top:518.30px;width:23.40px;height:17.70px;background:#fff;border:1px solid #ebe6eb;border-radius:2px;box-sizing:border-box;"></div><div class="b" style="left:1268.65px;top:518.30px;width:23.40px;height:17.70px;background:#fff;border:1px solid #ebe6eb;border-radius:2px;box-sizing:border-box;"></div><div class="b" style="left:1336.17px;top:518.30px;width:23.40px;height:17.70px;background:#fff;border:1px solid #ebe6eb;border-radius:2px;box-sizing:border-box;"></div><div class="b" style="left:1403.70px;top:518.30px;width:23.40px;height:17.70px;background:#fff;border:1px solid #ebe6eb;border-radius:2px;box-sizing:border-box;"></div><div class="b" style="left:1471.23px;top:518.30px;width:23.40px;height:17.70px;background:#fff;border:1px solid #ebe6eb;border-radius:2px;box-sizing:border-box;"></div><div class="b" style="left:1538.75px;top:518.30px;width:23.40px;height:17.70px;background:#fff;border:1px solid #ebe6eb;border-radius:2px;box-sizing:border-box;"></div><div class="b" style="left:1606.28px;top:518.30px;width:23.40px;height:17.70px;background:#fff;border:1px solid #ebe6eb;border-radius:2px;box-sizing:border-box;"></div><div class="b" style="left:1673.80px;top:518.30px;width:23.40px;height:17.70px;background:#fff;border:1px solid #ebe6eb;border-radius:2px;box-sizing:border-box;"></div><div class="b" style="left:919.40px;top:354.10px;width:78.50px;height:74.60px;border:2.3px solid #e01c1c;box-sizing:border-box;"></div><svg class="b" style="left:0;top:0" width="1755" height="603"><path d="M363.2 281.2L358.6 296.7M430.7 281.2L426.1 296.7M498.2 281.2L493.7 296.7M565.8 281.2L561.2 296.7M633.3 281.2L628.7 296.7M700.8 281.2L696.2 296.7M768.4 281.2L763.8 296.7M835.9 281.2L831.3 296.7M903.4 281.2L898.8 296.7M970.9 281.2L966.3 296.7M1038.5 281.2L1033.8 296.7M1106.0 281.2L1101.4 296.7M1173.5 281.2L1168.9 296.7M1241.0 281.2L1236.4 296.7M1308.6 281.2L1304.0 296.7M1376.1 281.2L1371.5 296.7M1443.6 281.2L1439.0 296.7M1511.1 281.2L1506.5 296.7M1578.7 281.2L1574.0 296.7M1646.2 281.2L1641.6 296.7M1713.7 281.2L1709.1 296.7M363.2 315.2L358.6 330.7M430.7 315.2L426.1 330.7M498.2 315.2L493.7 330.7M565.8 315.2L561.2 330.7M633.3 315.2L628.7 330.7M700.8 315.2L696.2 330.7M768.4 315.2L763.8 330.7M835.9 315.2L831.3 330.7M903.4 315.2L898.8 330.7M970.9 315.2L966.3 330.7M1038.5 315.2L1033.8 330.7M1106.0 315.2L1101.4 330.7M1173.5 315.2L1168.9 330.7M1241.0 315.2L1236.4 330.7M1308.6 315.2L1304.0 330.7M1376.1 315.2L1371.5 330.7M1443.6 315.2L1439.0 330.7M1511.1 315.2L1506.5 330.7M1578.7 315.2L1574.0 330.7M1646.2 315.2L1641.6 330.7M1713.7 315.2L1709.1 330.7M363.2 349.2L358.6 364.7M430.7 349.2L426.1 364.7M498.2 349.2L493.7 364.7M565.8 349.2L561.2 364.7M633.3 349.2L628.7 364.7M700.8 349.2L696.2 364.7M768.4 349.2L763.8 364.7M835.9 349.2L831.3 364.7M903.4 349.2L898.8 364.7M970.9 349.2L966.3 364.7M1038.5 349.2L1033.8 364.7M1106.0 349.2L1101.4 364.7M1173.5 349.2L1168.9 364.7M1241.0 349.2L1236.4 364.7M1308.6 349.2L1304.0 364.7M1376.1 349.2L1371.5 364.7M1443.6 349.2L1439.0 364.7M1511.1 349.2L1506.5 364.7M1578.7 349.2L1574.0 364.7M1646.2 349.2L1641.6 364.7M1713.7 349.2L1709.1 364.7M363.2 383.2L358.6 398.7M430.7 383.2L426.1 398.7M498.2 383.2L493.7 398.7M565.8 383.2L561.2 398.7M633.3 383.2L628.7 398.7M700.8 383.2L696.2 398.7M768.4 383.2L763.8 398.7M835.9 383.2L831.3 398.7M903.4 383.2L898.8 398.7M970.9 383.2L966.3 398.7M1038.5 383.2L1033.8 398.7M1106.0 383.2L1101.4 398.7M1173.5 383.2L1168.9 398.7M1241.0 383.2L1236.4 398.7M1308.6 383.2L1304.0 398.7M1376.1 383.2L1371.5 398.7M1443.6 383.2L1439.0 398.7M1511.1 383.2L1506.5 398.7M1578.7 383.2L1574.0 398.7M1646.2 383.2L1641.6 398.7M1713.7 383.2L1709.1 398.7M363.2 416.2L358.6 431.7M430.7 416.2L426.1 431.7M498.2 416.2L493.7 431.7M565.8 416.2L561.2 431.7M633.3 416.2L628.7 431.7M700.8 416.2L696.2 431.7M768.4 416.2L763.8 431.7M835.9 416.2L831.3 431.7M903.4 416.2L898.8 431.7M970.9 416.2L966.3 431.7M1038.5 416.2L1033.8 431.7M1106.0 416.2L1101.4 431.7M1173.5 416.2L1168.9 431.7M1241.0 416.2L1236.4 431.7M1308.6 416.2L1304.0 431.7M1376.1 416.2L1371.5 431.7M1443.6 416.2L1439.0 431.7M1511.1 416.2L1506.5 431.7M1578.7 416.2L1574.0 431.7M1646.2 416.2L1641.6 431.7M1713.7 416.2L1709.1 431.7M363.2 450.2L358.6 465.7M430.7 450.2L426.1 465.7M498.2 450.2L493.7 465.7M565.8 450.2L561.2 465.7M633.3 450.2L628.7 465.7M700.8 450.2L696.2 465.7M768.4 450.2L763.8 465.7M835.9 450.2L831.3 465.7M903.4 450.2L898.8 465.7M970.9 450.2L966.3 465.7M1038.5 450.2L1033.8 465.7M1106.0 450.2L1101.4 465.7M1173.5 450.2L1168.9 465.7M1241.0 450.2L1236.4 465.7M1308.6 450.2L1304.0 465.7M1376.1 450.2L1371.5 465.7M1443.6 450.2L1439.0 465.7M1511.1 450.2L1506.5 465.7M1578.7 450.2L1574.0 465.7M1646.2 450.2L1641.6 465.7M1713.7 450.2L1709.1 465.7M363.2 484.2L358.6 499.7M430.7 484.2L426.1 499.7M498.2 484.2L493.7 499.7M565.8 484.2L561.2 499.7M633.3 484.2L628.7 499.7M700.8 484.2L696.2 499.7M768.4 484.2L763.8 499.7M835.9 484.2L831.3 499.7M903.4 484.2L898.8 499.7M970.9 484.2L966.3 499.7M1038.5 484.2L1033.8 499.7M1106.0 484.2L1101.4 499.7M1173.5 484.2L1168.9 499.7M1241.0 484.2L1236.4 499.7M1308.6 484.2L1304.0 499.7M1376.1 484.2L1371.5 499.7M1443.6 484.2L1439.0 499.7M1511.1 484.2L1506.5 499.7M1578.7 484.2L1574.0 499.7M1646.2 484.2L1641.6 499.7M1713.7 484.2L1709.1 499.7M363.2 518.2L358.6 533.7M430.7 518.2L426.1 533.7M498.2 518.2L493.7 533.7M565.8 518.2L561.2 533.7M633.3 518.2L628.7 533.7M700.8 518.2L696.2 533.7M768.4 518.2L763.8 533.7M835.9 518.2L831.3 533.7M903.4 518.2L898.8 533.7M970.9 518.2L966.3 533.7M1038.5 518.2L1033.8 533.7M1106.0 518.2L1101.4 533.7M1173.5 518.2L1168.9 533.7M1241.0 518.2L1236.4 533.7M1308.6 518.2L1304.0 533.7M1376.1 518.2L1371.5 533.7M1443.6 518.2L1439.0 533.7M1511.1 518.2L1506.5 533.7M1578.7 518.2L1574.0 533.7M1646.2 518.2L1641.6 533.7M1713.7 518.2L1709.1 533.7" stroke="#8f8f8f" stroke-width="0.8" fill="none"/><path d="M354.20 284.70V290.80M352.30 286.30L354.30 285.00M366.70 288.70V294.80M364.80 290.30L366.80 289.00M421.73 284.70V290.80M419.82 286.30L421.82 285.00M434.23 288.70V294.80M432.32 290.30L434.32 289.00M489.25 284.70V290.80M487.35 286.30L489.35 285.00M501.75 288.70V294.80M499.85 290.30L501.85 289.00M556.78 284.70V290.80M554.88 286.30L556.88 285.00M569.28 288.70V294.80M567.38 290.30L569.38 289.00M624.30 284.70V290.80M622.40 286.30L624.40 285.00M636.80 288.70V294.80M634.90 290.30L636.90 289.00M691.83 284.70V290.80M689.93 286.30L691.93 285.00M704.33 288.70V294.80M702.43 290.30L704.43 289.00M759.35 284.70V290.80M757.45 286.30L759.45 285.00M771.85 288.70V294.80M769.95 290.30L771.95 289.00M826.88 284.70V290.80M824.98 286.30L826.98 285.00M839.38 288.70V294.80M837.48 290.30L839.48 289.00M894.40 284.70V290.80M892.50 286.30L894.50 285.00M906.90 288.70V294.80M905.00 290.30L907.00 289.00M961.93 284.70V290.80M960.03 286.30L962.03 285.00M974.43 288.70V294.80M972.53 290.30L974.53 289.00M1029.45 284.70V290.80M1027.55 286.30L1029.55 285.00M1041.95 288.70V294.80M1040.05 290.30L1042.05 289.00M1096.97 284.70V290.80M1095.08 286.30L1097.08 285.00M1109.47 288.70V294.80M1107.58 290.30L1109.58 289.00M1164.50 284.70V290.80M1162.60 286.30L1164.60 285.00M1177.00 288.70V294.80M1175.10 290.30L1177.10 289.00M1232.02 284.70V290.80M1230.12 286.30L1232.12 285.00M1244.52 288.70V294.80M1242.62 290.30L1244.62 289.00M1299.55 284.70V290.80M1297.65 286.30L1299.65 285.00M1312.05 288.70V294.80M1310.15 290.30L1312.15 289.00M1367.07 284.70V290.80M1365.17 286.30L1367.17 285.00M1379.57 288.70V294.80M1377.67 290.30L1379.67 289.00M1434.60 284.70V290.80M1432.70 286.30L1434.70 285.00M1447.10 288.70V294.80M1445.20 290.30L1447.20 289.00M1502.12 284.70V290.80M1500.23 286.30L1502.23 285.00M1514.62 288.70V294.80M1512.73 290.30L1514.73 289.00M1569.65 284.70V290.80M1567.75 286.30L1569.75 285.00M1582.15 288.70V294.80M1580.25 290.30L1582.25 289.00M1637.17 284.70V290.80M1635.28 286.30L1637.28 285.00M1649.67 288.70V294.80M1647.78 290.30L1649.78 289.00M1704.70 284.70V290.80M1702.80 286.30L1704.80 285.00M1717.20 288.70V294.80M1715.30 290.30L1717.30 289.00M354.20 318.70V324.80M352.30 320.30L354.30 319.00M366.70 322.70V328.80M364.80 324.30L366.80 323.00M421.73 318.70V324.80M419.82 320.30L421.82 319.00M434.23 322.70V328.80M432.32 324.30L434.32 323.00M489.25 318.70V324.80M487.35 320.30L489.35 319.00M501.75 322.70V328.80M499.85 324.30L501.85 323.00M556.78 318.70V324.80M554.88 320.30L556.88 319.00M569.28 322.70V328.80M567.38 324.30L569.38 323.00M624.30 318.70V324.80M622.40 320.30L624.40 319.00M636.80 322.70V328.80M634.90 324.30L636.90 323.00M691.83 318.70V324.80M689.93 320.30L691.93 319.00M704.33 322.70V328.80M702.43 324.30L704.43 323.00M759.35 318.70V324.80M757.45 320.30L759.45 319.00M771.85 322.70V328.80M769.95 324.30L771.95 323.00M826.88 318.70V324.80M824.98 320.30L826.98 319.00M839.38 322.70V328.80M837.48 324.30L839.48 323.00M894.40 318.70V324.80M892.50 320.30L894.50 319.00M906.90 322.70V328.80M905.00 324.30L907.00 323.00M961.93 318.70V324.80M960.03 320.30L962.03 319.00M974.43 322.70V328.80M972.53 324.30L974.53 323.00M1029.45 318.70V324.80M1027.55 320.30L1029.55 319.00M1041.95 322.70V328.80M1040.05 324.30L1042.05 323.00M1096.97 318.70V324.80M1095.08 320.30L1097.08 319.00M1109.47 322.70V328.80M1107.58 324.30L1109.58 323.00M1164.50 318.70V324.80M1162.60 320.30L1164.60 319.00M1177.00 322.70V328.80M1175.10 324.30L1177.10 323.00M1232.02 318.70V324.80M1230.12 320.30L1232.12 319.00M1244.52 322.70V328.80M1242.62 324.30L1244.62 323.00M1299.55 318.70V324.80M1297.65 320.30L1299.65 319.00M1312.05 322.70V328.80M1310.15 324.30L1312.15 323.00M1367.07 318.70V324.80M1365.17 320.30L1367.17 319.00M1379.57 322.70V328.80M1377.67 324.30L1379.67 323.00M1434.60 318.70V324.80M1432.70 320.30L1434.70 319.00M1447.10 322.70V328.80M1445.20 324.30L1447.20 323.00M1502.12 318.70V324.80M1500.23 320.30L1502.23 319.00M1514.62 322.70V328.80M1512.73 324.30L1514.73 323.00M1569.65 318.70V324.80M1567.75 320.30L1569.75 319.00M1582.15 322.70V328.80M1580.25 324.30L1582.25 323.00M1637.17 318.70V324.80M1635.28 320.30L1637.28 319.00M1649.67 322.70V328.80M1647.78 324.30L1649.78 323.00M1704.70 318.70V324.80M1702.80 320.30L1704.80 319.00M1717.20 322.70V328.80M1715.30 324.30L1717.30 323.00M354.20 351.70V357.80M352.30 353.30L354.30 352.00M366.70 356.70V362.80M364.80 358.30L366.80 357.00M421.73 351.70V357.80M419.82 353.30L421.82 352.00M434.23 356.70V362.80M432.32 358.30L434.32 357.00M489.25 351.70V357.80M487.35 353.30L489.35 352.00M501.75 356.70V362.80M499.85 358.30L501.85 357.00M556.78 351.70V357.80M554.88 353.30L556.88 352.00M569.28 356.70V362.80M567.38 358.30L569.38 357.00M624.30 351.70V357.80M622.40 353.30L624.40 352.00M636.80 356.70V362.80M634.90 358.30L636.90 357.00M691.83 351.70V357.80M689.93 353.30L691.93 352.00M704.33 356.70V362.80M702.43 358.30L704.43 357.00M759.35 351.70V357.80M757.45 353.30L759.45 352.00M771.85 356.70V362.80M769.95 358.30L771.95 357.00M826.88 351.70V357.80M824.98 353.30L826.98 352.00M839.38 356.70V362.80M837.48 358.30L839.48 357.00M894.40 351.70V357.80M892.50 353.30L894.50 352.00M906.90 356.70V362.80M905.00 358.30L907.00 357.00M961.93 351.70V357.80M960.03 353.30L962.03 352.00M974.43 356.70V362.80M972.53 358.30L974.53 357.00M1029.45 351.70V357.80M1027.55 353.30L1029.55 352.00M1041.95 356.70V362.80M1040.05 358.30L1042.05 357.00M1096.97 351.70V357.80M1095.08 353.30L1097.08 352.00M1109.47 356.70V362.80M1107.58 358.30L1109.58 357.00M1164.50 351.70V357.80M1162.60 353.30L1164.60 352.00M1177.00 356.70V362.80M1175.10 358.30L1177.10 357.00M1232.02 351.70V357.80M1230.12 353.30L1232.12 352.00M1244.52 356.70V362.80M1242.62 358.30L1244.62 357.00M1299.55 351.70V357.80M1297.65 353.30L1299.65 352.00M1312.05 356.70V362.80M1310.15 358.30L1312.15 357.00M1367.07 351.70V357.80M1365.17 353.30L1367.17 352.00M1379.57 356.70V362.80M1377.67 358.30L1379.67 357.00M1434.60 351.70V357.80M1432.70 353.30L1434.70 352.00M1447.10 356.70V362.80M1445.20 358.30L1447.20 357.00M1502.12 351.70V357.80M1500.23 353.30L1502.23 352.00M1514.62 356.70V362.80M1512.73 358.30L1514.73 357.00M1569.65 351.70V357.80M1567.75 353.30L1569.75 352.00M1582.15 356.70V362.80M1580.25 358.30L1582.25 357.00M1637.17 351.70V357.80M1635.28 353.30L1637.28 352.00M1649.67 356.70V362.80M1647.78 358.30L1649.78 357.00M1704.70 351.70V357.80M1702.80 353.30L1704.80 352.00M1717.20 356.70V362.80M1715.30 358.30L1717.30 357.00M354.20 385.70V391.80M352.30 387.30L354.30 386.00M366.70 390.70V396.80M364.80 392.30L366.80 391.00M421.73 385.70V391.80M419.82 387.30L421.82 386.00M434.23 390.70V396.80M432.32 392.30L434.32 391.00M489.25 385.70V391.80M487.35 387.30L489.35 386.00M501.75 390.70V396.80M499.85 392.30L501.85 391.00M556.78 385.70V391.80M554.88 387.30L556.88 386.00M569.28 390.70V396.80M567.38 392.30L569.38 391.00M624.30 385.70V391.80M622.40 387.30L624.40 386.00M636.80 390.70V396.80M634.90 392.30L636.90 391.00M691.83 385.70V391.80M689.93 387.30L691.93 386.00M704.33 390.70V396.80M702.43 392.30L704.43 391.00M759.35 385.70V391.80M757.45 387.30L759.45 386.00M771.85 390.70V396.80M769.95 392.30L771.95 391.00M826.88 385.70V391.80M824.98 387.30L826.98 386.00M839.38 390.70V396.80M837.48 392.30L839.48 391.00M894.40 385.70V391.80M892.50 387.30L894.50 386.00M906.90 390.70V396.80M905.00 392.30L907.00 391.00M961.77 385.60a1.95 2.85 0 1 0 0.01 0zM974.43 390.70V396.80M972.53 392.30L974.53 391.00M1029.45 385.70V391.80M1027.55 387.30L1029.55 386.00M1041.95 390.70V396.80M1040.05 392.30L1042.05 391.00M1096.97 385.70V391.80M1095.08 387.30L1097.08 386.00M1109.47 390.70V396.80M1107.58 392.30L1109.58 391.00M1164.50 385.70V391.80M1162.60 387.30L1164.60 386.00M1177.00 390.70V396.80M1175.10 392.30L1177.10 391.00M1232.02 385.70V391.80M1230.12 387.30L1232.12 386.00M1244.52 390.70V396.80M1242.62 392.30L1244.62 391.00M1299.55 385.70V391.80M1297.65 387.30L1299.65 386.00M1312.05 390.70V396.80M1310.15 392.30L1312.15 391.00M1367.07 385.70V391.80M1365.17 387.30L1367.17 386.00M1379.57 390.70V396.80M1377.67 392.30L1379.67 391.00M1434.60 385.70V391.80M1432.70 387.30L1434.70 386.00M1447.10 390.70V396.80M1445.20 392.30L1447.20 391.00M1502.12 385.70V391.80M1500.23 387.30L1502.23 386.00M1514.62 390.70V396.80M1512.73 392.30L1514.73 391.00M1569.65 385.70V391.80M1567.75 387.30L1569.75 386.00M1582.15 390.70V396.80M1580.25 392.30L1582.25 391.00M1637.17 385.70V391.80M1635.28 387.30L1637.28 386.00M1649.67 390.70V396.80M1647.78 392.30L1649.78 391.00M1704.70 385.70V391.80M1702.80 387.30L1704.80 386.00M1717.20 390.70V396.80M1715.30 392.30L1717.30 391.00M354.20 419.70V425.80M352.30 421.30L354.30 420.00M366.70 423.70V429.80M364.80 425.30L366.80 424.00M421.73 419.70V425.80M419.82 421.30L421.82 420.00M434.23 423.70V429.80M432.32 425.30L434.32 424.00M489.25 419.70V425.80M487.35 421.30L489.35 420.00M501.75 423.70V429.80M499.85 425.30L501.85 424.00M556.78 419.70V425.80M554.88 421.30L556.88 420.00M569.28 423.70V429.80M567.38 425.30L569.38 424.00M624.30 419.70V425.80M622.40 421.30L624.40 420.00M636.80 423.70V429.80M634.90 425.30L636.90 424.00M691.83 419.70V425.80M689.93 421.30L691.93 420.00M704.33 423.70V429.80M702.43 425.30L704.43 424.00M759.35 419.70V425.80M757.45 421.30L759.45 420.00M771.85 423.70V429.80M769.95 425.30L771.95 424.00M826.88 419.70V425.80M824.98 421.30L826.98 420.00M839.38 423.70V429.80M837.48 425.30L839.48 424.00M894.40 419.70V425.80M892.50 421.30L894.50 420.00M906.90 423.70V429.80M905.00 425.30L907.00 424.00M961.93 419.70V425.80M960.03 421.30L962.03 420.00M974.43 423.70V429.80M972.53 425.30L974.53 424.00M1029.45 419.70V425.80M1027.55 421.30L1029.55 420.00M1041.95 423.70V429.80M1040.05 425.30L1042.05 424.00M1096.97 419.70V425.80M1095.08 421.30L1097.08 420.00M1109.47 423.70V429.80M1107.58 425.30L1109.58 424.00M1164.50 419.70V425.80M1162.60 421.30L1164.60 420.00M1177.00 423.70V429.80M1175.10 425.30L1177.10 424.00M1232.02 419.70V425.80M1230.12 421.30L1232.12 420.00M1244.52 423.70V429.80M1242.62 425.30L1244.62 424.00M1299.55 419.70V425.80M1297.65 421.30L1299.65 420.00M1312.05 423.70V429.80M1310.15 425.30L1312.15 424.00M1367.07 419.70V425.80M1365.17 421.30L1367.17 420.00M1379.57 423.70V429.80M1377.67 425.30L1379.67 424.00M1434.60 419.70V425.80M1432.70 421.30L1434.70 420.00M1447.10 423.70V429.80M1445.20 425.30L1447.20 424.00M1502.12 419.70V425.80M1500.23 421.30L1502.23 420.00M1514.62 423.70V429.80M1512.73 425.30L1514.73 424.00M1569.65 419.70V425.80M1567.75 421.30L1569.75 420.00M1582.15 423.70V429.80M1580.25 425.30L1582.25 424.00M1637.17 419.70V425.80M1635.28 421.30L1637.28 420.00M1649.67 423.70V429.80M1647.78 425.30L1649.78 424.00M1704.70 419.70V425.80M1702.80 421.30L1704.80 420.00M1717.20 423.70V429.80M1715.30 425.30L1717.30 424.00M354.20 453.70V459.80M352.30 455.30L354.30 454.00M366.70 457.70V463.80M364.80 459.30L366.80 458.00M421.73 453.70V459.80M419.82 455.30L421.82 454.00M434.23 457.70V463.80M432.32 459.30L434.32 458.00M489.25 453.70V459.80M487.35 455.30L489.35 454.00M501.75 457.70V463.80M499.85 459.30L501.85 458.00M556.78 453.70V459.80M554.88 455.30L556.88 454.00M569.28 457.70V463.80M567.38 459.30L569.38 458.00M624.30 453.70V459.80M622.40 455.30L624.40 454.00M636.80 457.70V463.80M634.90 459.30L636.90 458.00M691.83 453.70V459.80M689.93 455.30L691.93 454.00M704.33 457.70V463.80M702.43 459.30L704.43 458.00M759.35 453.70V459.80M757.45 455.30L759.45 454.00M771.85 457.70V463.80M769.95 459.30L771.95 458.00M826.88 453.70V459.80M824.98 455.30L826.98 454.00M839.38 457.70V463.80M837.48 459.30L839.48 458.00M894.40 453.70V459.80M892.50 455.30L894.50 454.00M906.90 457.70V463.80M905.00 459.30L907.00 458.00M961.93 453.70V459.80M960.03 455.30L962.03 454.00M974.43 457.70V463.80M972.53 459.30L974.53 458.00M1029.45 453.70V459.80M1027.55 455.30L1029.55 454.00M1041.95 457.70V463.80M1040.05 459.30L1042.05 458.00M1096.97 453.70V459.80M1095.08 455.30L1097.08 454.00M1109.47 457.70V463.80M1107.58 459.30L1109.58 458.00M1164.50 453.70V459.80M1162.60 455.30L1164.60 454.00M1177.00 457.70V463.80M1175.10 459.30L1177.10 458.00M1232.02 453.70V459.80M1230.12 455.30L1232.12 454.00M1244.52 457.70V463.80M1242.62 459.30L1244.62 458.00M1299.55 453.70V459.80M1297.65 455.30L1299.65 454.00M1312.05 457.70V463.80M1310.15 459.30L1312.15 458.00M1367.07 453.70V459.80M1365.17 455.30L1367.17 454.00M1379.57 457.70V463.80M1377.67 459.30L1379.67 458.00M1434.60 453.70V459.80M1432.70 455.30L1434.70 454.00M1447.10 457.70V463.80M1445.20 459.30L1447.20 458.00M1502.12 453.70V459.80M1500.23 455.30L1502.23 454.00M1514.62 457.70V463.80M1512.73 459.30L1514.73 458.00M1569.65 453.70V459.80M1567.75 455.30L1569.75 454.00M1582.15 457.70V463.80M1580.25 459.30L1582.25 458.00M1637.17 453.70V459.80M1635.28 455.30L1637.28 454.00M1649.67 457.70V463.80M1647.78 459.30L1649.78 458.00M1704.70 453.70V459.80M1702.80 455.30L1704.80 454.00M1717.20 457.70V463.80M1715.30 459.30L1717.30 458.00M354.20 486.70V492.80M352.30 488.30L354.30 487.00M366.70 491.70V497.80M364.80 493.30L366.80 492.00M421.73 486.70V492.80M419.82 488.30L421.82 487.00M434.23 491.70V497.80M432.32 493.30L434.32 492.00M489.25 486.70V492.80M487.35 488.30L489.35 487.00M501.75 491.70V497.80M499.85 493.30L501.85 492.00M556.78 486.70V492.80M554.88 488.30L556.88 487.00M569.28 491.70V497.80M567.38 493.30L569.38 492.00M624.30 486.70V492.80M622.40 488.30L624.40 487.00M636.80 491.70V497.80M634.90 493.30L636.90 492.00M691.83 486.70V492.80M689.93 488.30L691.93 487.00M704.33 491.70V497.80M702.43 493.30L704.43 492.00M759.35 486.70V492.80M757.45 488.30L759.45 487.00M771.85 491.70V497.80M769.95 493.30L771.95 492.00M826.88 486.70V492.80M824.98 488.30L826.98 487.00M839.38 491.70V497.80M837.48 493.30L839.48 492.00M894.40 486.70V492.80M892.50 488.30L894.50 487.00M906.90 491.70V497.80M905.00 493.30L907.00 492.00M961.93 486.70V492.80M960.03 488.30L962.03 487.00M974.43 491.70V497.80M972.53 493.30L974.53 492.00M1029.45 486.70V492.80M1027.55 488.30L1029.55 487.00M1041.95 491.70V497.80M1040.05 493.30L1042.05 492.00M1096.97 486.70V492.80M1095.08 488.30L1097.08 487.00M1109.47 491.70V497.80M1107.58 493.30L1109.58 492.00M1164.50 486.70V492.80M1162.60 488.30L1164.60 487.00M1177.00 491.70V497.80M1175.10 493.30L1177.10 492.00M1232.02 486.70V492.80M1230.12 488.30L1232.12 487.00M1244.52 491.70V497.80M1242.62 493.30L1244.62 492.00M1299.55 486.70V492.80M1297.65 488.30L1299.65 487.00M1312.05 491.70V497.80M1310.15 493.30L1312.15 492.00M1367.07 486.70V492.80M1365.17 488.30L1367.17 487.00M1379.57 491.70V497.80M1377.67 493.30L1379.67 492.00M1434.60 486.70V492.80M1432.70 488.30L1434.70 487.00M1447.10 491.70V497.80M1445.20 493.30L1447.20 492.00M1502.12 486.70V492.80M1500.23 488.30L1502.23 487.00M1514.62 491.70V497.80M1512.73 493.30L1514.73 492.00M1569.65 486.70V492.80M1567.75 488.30L1569.75 487.00M1582.15 491.70V497.80M1580.25 493.30L1582.25 492.00M1637.17 486.70V492.80M1635.28 488.30L1637.28 487.00M1649.67 491.70V497.80M1647.78 493.30L1649.78 492.00M1704.70 486.70V492.80M1702.80 488.30L1704.80 487.00M1717.20 491.70V497.80M1715.30 493.30L1717.30 492.00M354.20 520.70V526.80M352.30 522.30L354.30 521.00M366.70 525.70V531.80M364.80 527.30L366.80 526.00M421.73 520.70V526.80M419.82 522.30L421.82 521.00M434.23 525.70V531.80M432.32 527.30L434.32 526.00M489.25 520.70V526.80M487.35 522.30L489.35 521.00M501.75 525.70V531.80M499.85 527.30L501.85 526.00M556.78 520.70V526.80M554.88 522.30L556.88 521.00M569.28 525.70V531.80M567.38 527.30L569.38 526.00M624.30 520.70V526.80M622.40 522.30L624.40 521.00M636.80 525.70V531.80M634.90 527.30L636.90 526.00M691.83 520.70V526.80M689.93 522.30L691.93 521.00M704.33 525.70V531.80M702.43 527.30L704.43 526.00M759.35 520.70V526.80M757.45 522.30L759.45 521.00M771.85 525.70V531.80M769.95 527.30L771.95 526.00M826.88 520.70V526.80M824.98 522.30L826.98 521.00M839.38 525.70V531.80M837.48 527.30L839.48 526.00M894.40 520.70V526.80M892.50 522.30L894.50 521.00M906.90 525.70V531.80M905.00 527.30L907.00 526.00M961.93 520.70V526.80M960.03 522.30L962.03 521.00M974.43 525.70V531.80M972.53 527.30L974.53 526.00M1029.45 520.70V526.80M1027.55 522.30L1029.55 521.00M1041.95 525.70V531.80M1040.05 527.30L1042.05 526.00M1096.97 520.70V526.80M1095.08 522.30L1097.08 521.00M1109.47 525.70V531.80M1107.58 527.30L1109.58 526.00M1164.50 520.70V526.80M1162.60 522.30L1164.60 521.00M1177.00 525.70V531.80M1175.10 527.30L1177.10 526.00M1232.02 520.70V526.80M1230.12 522.30L1232.12 521.00M1244.52 525.70V531.80M1242.62 527.30L1244.62 526.00M1299.55 520.70V526.80M1297.65 522.30L1299.65 521.00M1312.05 525.70V531.80M1310.15 527.30L1312.15 526.00M1367.07 520.70V526.80M1365.17 522.30L1367.17 521.00M1379.57 525.70V531.80M1377.67 527.30L1379.67 526.00M1434.60 520.70V526.80M1432.70 522.30L1434.70 521.00M1447.10 525.70V531.80M1445.20 527.30L1447.20 526.00M1502.12 520.70V526.80M1500.23 522.30L1502.23 521.00M1514.62 525.70V531.80M1512.73 527.30L1514.73 526.00M1569.65 520.70V526.80M1567.75 522.30L1569.75 521.00M1582.15 525.70V531.80M1580.25 527.30L1582.25 526.00M1637.17 520.70V526.80M1635.28 522.30L1637.28 521.00M1649.67 525.70V531.80M1647.78 527.30L1649.78 526.00M1704.70 520.70V526.80M1702.80 522.30L1704.80 521.00M1717.20 525.70V531.80M1715.30 527.30L1717.30 526.00" stroke="#1a1a1a" stroke-width="1.15" fill="none"/></svg><div class="b" style="left:16.00px;top:544.00px;width:1721.00px;height:16.00px;background:#fafafa;border:1px solid #ececec;border-top:none;box-sizing:border-box;"></div><div class="b" style="left:21px;top:547px;"><svg width="8" height="9" viewBox="0 0 8 9"><path d="M7.3 0.5V8.5L0.7 4.5z" fill="#8a8a8a" stroke="#8a8a8a" stroke-width="0.8" stroke-linejoin="round"/></svg></div><div class="b" style="left:1724px;top:546.5px;"><svg width="8" height="9" viewBox="0 0 8 9"><path d="M0.7 0.5V8.5L7.3 4.5z" fill="#8a8a8a" stroke="#8a8a8a" stroke-width="0.8" stroke-linejoin="round"/></svg></div><div class="b" style="left:509.00px;top:547.00px;width:1209.00px;height:9.00px;background:#8a8a8a;border-radius:4.5px;"></div></body></html>
